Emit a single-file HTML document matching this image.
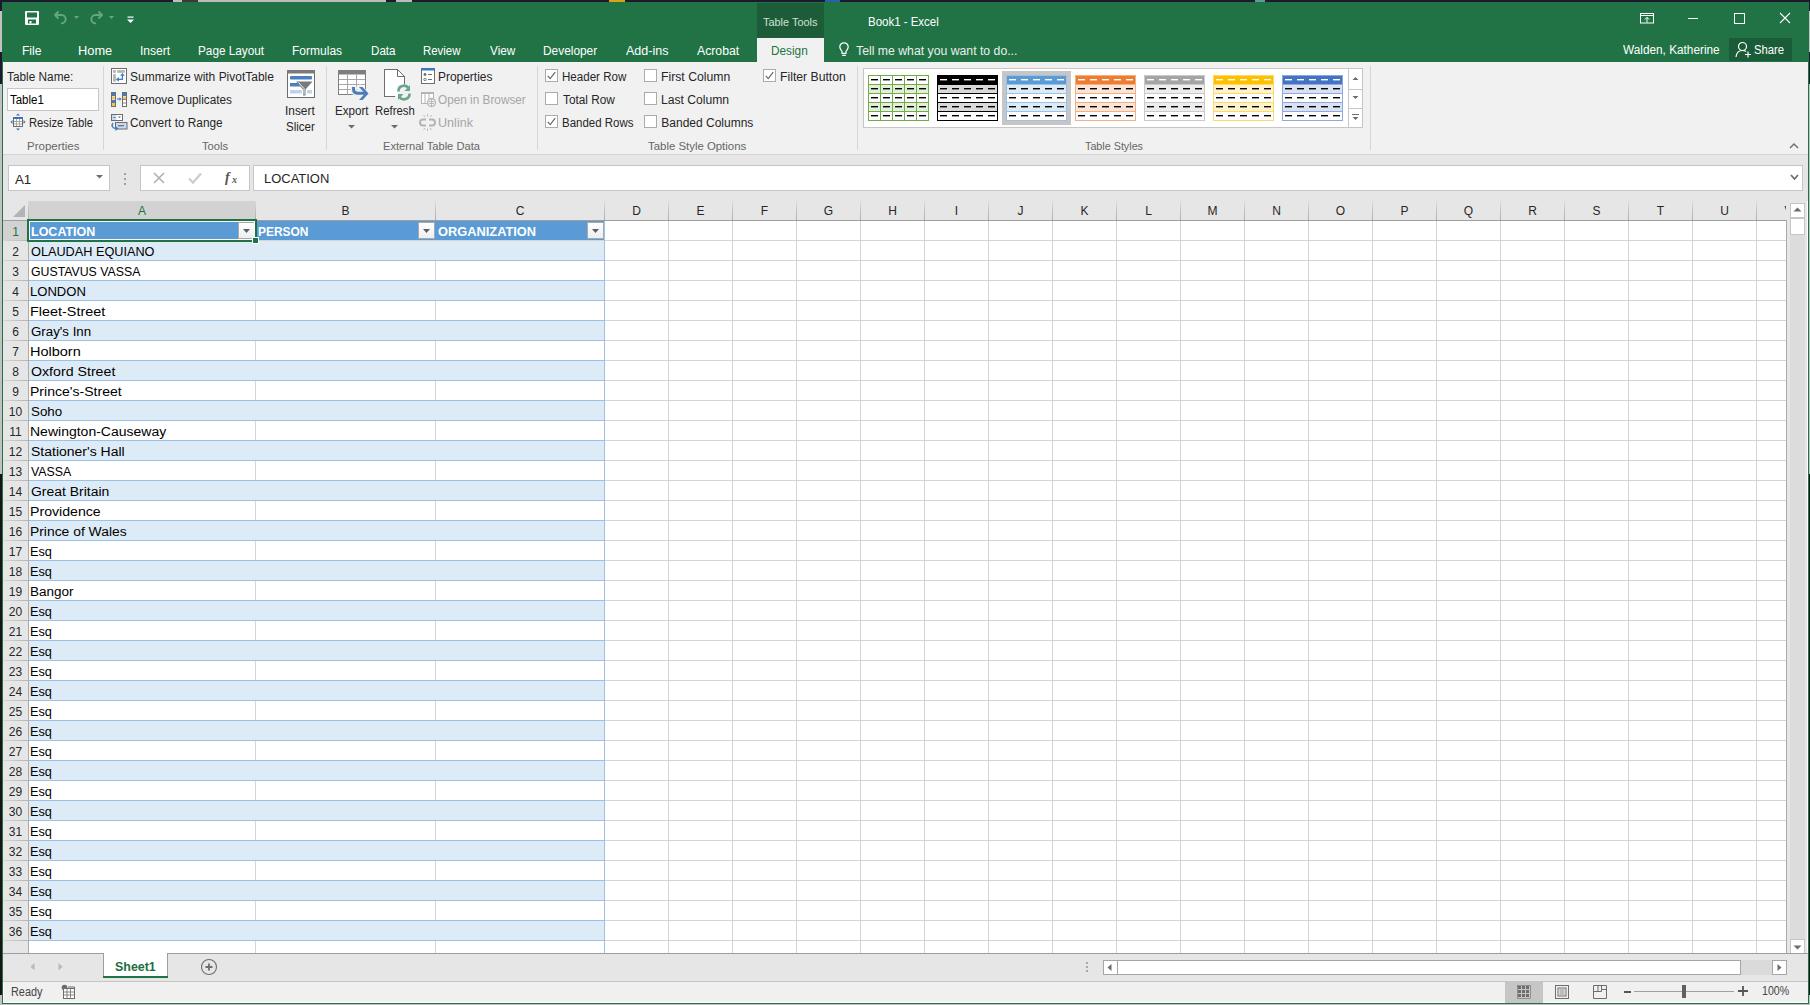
<!DOCTYPE html><html><head><meta charset="utf-8"><style>
html,body{margin:0;padding:0;}
body{width:1810px;height:1005px;position:relative;overflow:hidden;background:#c2c2c2;font-family:'Liberation Sans',sans-serif;}
div,svg{box-sizing:border-box;}
svg{overflow:visible;}
</style></head><body>
<div style="position:absolute;left:0px;top:0px;width:1810px;height:2px;background:#1b1a2e;"></div>
<div style="position:absolute;left:173px;top:0px;width:213px;height:2px;background:#bdbdbd;"></div>
<div style="position:absolute;left:182px;top:0px;width:16px;height:2px;background:#3a3a3a;"></div>
<div style="position:absolute;left:396px;top:0px;width:16px;height:2px;background:#bdbdbd;"></div>
<div style="position:absolute;left:609px;top:0px;width:16px;height:2px;background:#d9a21b;"></div>
<div style="position:absolute;left:825px;top:0px;width:15px;height:2px;background:#2a62a8;"></div>
<div style="position:absolute;left:1255px;top:0px;width:10px;height:2px;background:#5a9aa0;"></div>
<div style="position:absolute;left:0px;top:0px;width:2px;height:11px;background:#1b1a2e;"></div>
<div style="position:absolute;left:0px;top:52px;width:2px;height:32px;background:#1b1a2e;"></div>
<div style="position:absolute;left:0px;top:474px;width:2px;height:521px;background:#151515;"></div>
<div style="position:absolute;left:1809px;top:0px;width:1px;height:11px;background:#1b1a2e;"></div>
<div style="position:absolute;left:1809px;top:52px;width:1px;height:32px;background:#1b1a2e;"></div>
<div style="position:absolute;left:1809px;top:474px;width:1px;height:521px;background:#151515;"></div>
<div style="position:absolute;left:2px;top:2px;width:1807px;height:1002px;background:#217346;"></div>
<div style="position:absolute;left:3px;top:38px;width:1805px;height:964px;background:#ffffff;"></div>
<div style="position:absolute;left:2px;top:2px;width:1807px;height:36px;background:#217346;"></div>
<div style="position:absolute;left:757px;top:3px;width:67px;height:35px;background:#1d5c39;"></div>
<div style="position:absolute;left:763.40px;top:17px;font-family:'Liberation Sans', sans-serif;font-size:11px;line-height:11px;color:#cfe0d5;font-weight:400;white-space:nowrap;transform-origin:0 0;transform:scaleX(0.9926);">Table Tools</div>
<div style="position:absolute;left:868.44px;top:16px;font-family:'Liberation Sans', sans-serif;font-size:12px;line-height:12px;color:#ffffff;font-weight:400;white-space:nowrap;transform-origin:0 0;transform:scaleX(0.9557);">Book1 - Excel</div>
<svg style="position:absolute;left:25px;top:11px;" width="14" height="14" viewBox="0 0 14 14"><rect x="0" y="0" width="14" height="14" rx="1" fill="#fff"/><rect x="2" y="1.5" width="10" height="5" fill="#217346"/><rect x="3" y="8.5" width="8" height="4" fill="#217346"/><rect x="4.5" y="10" width="2" height="2.5" fill="#fff"/></svg>
<svg style="position:absolute;left:53px;top:10px;" width="16" height="16" viewBox="0 0 16 16"><path d="M5.5 1.5 L2 5 L5.5 8.5" fill="none" stroke="#67a582" stroke-width="1.9" stroke-linejoin="round"/><path d="M2.5 5 H8.5 A4.2 4.2 0 0 1 8.5 13.4 H8" fill="none" stroke="#67a582" stroke-width="1.9"/></svg>
<svg style="position:absolute;left:74px;top:16px;" width="6" height="4" viewBox="0 0 6 4"><path d="M0 0 H5 L2.5 3 Z" fill="#67a582"/></svg>
<svg style="position:absolute;left:88px;top:10px;" width="16" height="16" viewBox="0 0 16 16"><path d="M10.5 1.5 L14 5 L10.5 8.5" fill="none" stroke="#67a582" stroke-width="1.9" stroke-linejoin="round"/><path d="M13.5 5 H7.5 A4.2 4.2 0 0 0 7.5 13.4 H8" fill="none" stroke="#67a582" stroke-width="1.9"/></svg>
<svg style="position:absolute;left:109px;top:16px;" width="6" height="4" viewBox="0 0 6 4"><path d="M0 0 H5 L2.5 3 Z" fill="#67a582"/></svg>
<svg style="position:absolute;left:127px;top:16px;" width="7" height="8" viewBox="0 0 7 8"><rect x="0.5" y="0.5" width="6" height="1.2" fill="#fff"/><path d="M0 3.5 H7 L3.5 7 Z" fill="#fff"/></svg>
<svg style="position:absolute;left:1640px;top:13px;" width="14" height="11" viewBox="0 0 14 11"><rect x="0.5" y="0.5" width="13" height="9.5" fill="none" stroke="#fff" stroke-width="1"/><path d="M1 2.5 H13" stroke="#fff" stroke-width="1"/><path d="M7 9.5 V4.5 M4.8 6.5 L7 4.3 L9.2 6.5" fill="none" stroke="#fff" stroke-width="1"/></svg>
<div style="position:absolute;left:1688px;top:18px;width:10px;height:1px;background:#ffffff;"></div>
<svg style="position:absolute;left:1734px;top:13px;" width="11" height="11" viewBox="0 0 11 11"><rect x="0.5" y="0.5" width="10" height="10" fill="none" stroke="#fff" stroke-width="1"/></svg>
<svg style="position:absolute;left:1779px;top:12px;" width="12" height="12" viewBox="0 0 12 12"><path d="M1 1 L11 11 M11 1 L1 11" stroke="#fff" stroke-width="1.1"/></svg>
<div style="position:absolute;left:2px;top:38px;width:1807px;height:24px;background:#217346;"></div>
<div style="position:absolute;left:22.29px;top:45px;font-family:'Liberation Sans', sans-serif;font-size:12px;line-height:12px;color:#ffffff;font-weight:400;white-space:nowrap;transform-origin:0 0;transform:scaleX(1.0056);">File</div>
<div style="position:absolute;left:78.33px;top:45px;font-family:'Liberation Sans', sans-serif;font-size:12px;line-height:12px;color:#ffffff;font-weight:400;white-space:nowrap;transform-origin:0 0;transform:scaleX(1.0689);">Home</div>
<div style="position:absolute;left:139.89px;top:45px;font-family:'Liberation Sans', sans-serif;font-size:12px;line-height:12px;color:#ffffff;font-weight:400;white-space:nowrap;transform-origin:0 0;transform:scaleX(1.0069);">Insert</div>
<div style="position:absolute;left:198.02px;top:45px;font-family:'Liberation Sans', sans-serif;font-size:12px;line-height:12px;color:#ffffff;font-weight:400;white-space:nowrap;transform-origin:0 0;transform:scaleX(0.9804);">Page Layout</div>
<div style="position:absolute;left:292.30px;top:45px;font-family:'Liberation Sans', sans-serif;font-size:12px;line-height:12px;color:#ffffff;font-weight:400;white-space:nowrap;transform-origin:0 0;transform:scaleX(1.0021);">Formulas</div>
<div style="position:absolute;left:370.53px;top:45px;font-family:'Liberation Sans', sans-serif;font-size:12px;line-height:12px;color:#ffffff;font-weight:400;white-space:nowrap;transform-origin:0 0;transform:scaleX(0.9671);">Data</div>
<div style="position:absolute;left:423.35px;top:45px;font-family:'Liberation Sans', sans-serif;font-size:12px;line-height:12px;color:#ffffff;font-weight:400;white-space:nowrap;transform-origin:0 0;transform:scaleX(0.9505);">Review</div>
<div style="position:absolute;left:489.70px;top:45px;font-family:'Liberation Sans', sans-serif;font-size:12px;line-height:12px;color:#ffffff;font-weight:400;white-space:nowrap;transform-origin:0 0;transform:scaleX(0.9805);">View</div>
<div style="position:absolute;left:543.01px;top:45px;font-family:'Liberation Sans', sans-serif;font-size:12px;line-height:12px;color:#ffffff;font-weight:400;white-space:nowrap;transform-origin:0 0;transform:scaleX(0.9907);">Developer</div>
<div style="position:absolute;left:625.90px;top:45px;font-family:'Liberation Sans', sans-serif;font-size:12px;line-height:12px;color:#ffffff;font-weight:400;white-space:nowrap;transform-origin:0 0;transform:scaleX(1.0448);">Add-ins</div>
<div style="position:absolute;left:696.90px;top:45px;font-family:'Liberation Sans', sans-serif;font-size:12px;line-height:12px;color:#ffffff;font-weight:400;white-space:nowrap;transform-origin:0 0;transform:scaleX(1.0194);">Acrobat</div>
<div style="position:absolute;left:757px;top:38px;width:67px;height:24px;background:#f1f1f1;"></div>
<div style="position:absolute;left:771.02px;top:45px;font-family:'Liberation Sans', sans-serif;font-size:12px;line-height:12px;color:#217346;font-weight:400;white-space:nowrap;transform-origin:0 0;transform:scaleX(0.9831);">Design</div>
<svg style="position:absolute;left:839px;top:42px;" width="11" height="15" viewBox="0 0 11 15"><path d="M5 0.8 C2.4 0.8 0.8 2.7 0.8 5 C0.8 6.9 2.2 8 3 9.3 V11.3 H7 V9.3 C7.8 8 9.2 6.9 9.2 5 C9.2 2.7 7.6 0.8 5 0.8 Z M3.2 13.3 H6.8" fill="none" stroke="#fff" stroke-width="1.2"/></svg>
<div style="position:absolute;left:855.69px;top:45px;font-family:'Liberation Sans', sans-serif;font-size:12px;line-height:12px;color:#e9efeb;font-weight:400;white-space:nowrap;transform-origin:0 0;transform:scaleX(1.0211);">Tell me what you want to do...</div>
<div style="position:absolute;left:1622.90px;top:44px;font-family:'Liberation Sans', sans-serif;font-size:12px;line-height:12px;color:#ffffff;font-weight:400;white-space:nowrap;transform-origin:0 0;transform:scaleX(0.9836);">Walden, Katherine</div>
<div style="position:absolute;left:1729px;top:38px;width:63px;height:23px;background:#1b5c38;"></div>
<svg style="position:absolute;left:1735px;top:41px;" width="17" height="17" viewBox="0 0 17 17"><circle cx="7.5" cy="5.5" r="4" fill="none" stroke="#fff" stroke-width="1.2"/><path d="M1 16 C1.5 11.5 4 9.5 7.5 9.5 C9 9.5 10 9.8 11 10.5" fill="none" stroke="#fff" stroke-width="1.2"/><path d="M13 10.5 V16.5 M10 13.5 H16" stroke="#fff" stroke-width="1.2"/></svg>
<div style="position:absolute;left:1754.44px;top:44px;font-family:'Liberation Sans', sans-serif;font-size:12px;line-height:12px;color:#ffffff;font-weight:400;white-space:nowrap;transform-origin:0 0;transform:scaleX(0.9385);">Share</div>
<div style="position:absolute;left:3px;top:62px;width:1805px;height:92px;background:#f1f1f1;"></div>
<div style="position:absolute;left:3px;top:154px;width:1805px;height:1px;background:#d5d5d5;"></div>
<div style="position:absolute;left:103px;top:66px;width:1px;height:84px;background:#d6d6d6;"></div>
<div style="position:absolute;left:326px;top:66px;width:1px;height:84px;background:#d6d6d6;"></div>
<div style="position:absolute;left:537px;top:66px;width:1px;height:84px;background:#d6d6d6;"></div>
<div style="position:absolute;left:857px;top:66px;width:1px;height:84px;background:#d6d6d6;"></div>
<div style="position:absolute;left:1370px;top:66px;width:1px;height:84px;background:#d6d6d6;"></div>
<div style="position:absolute;left:26.56px;top:141px;font-family:'Liberation Sans', sans-serif;font-size:11px;line-height:11px;color:#666666;font-weight:400;white-space:nowrap;transform-origin:0 0;transform:scaleX(1.0451);">Properties</div>
<div style="position:absolute;left:201.80px;top:141px;font-family:'Liberation Sans', sans-serif;font-size:11px;line-height:11px;color:#666666;font-weight:400;white-space:nowrap;transform-origin:0 0;transform:scaleX(1.0159);">Tools</div>
<div style="position:absolute;left:382.59px;top:141px;font-family:'Liberation Sans', sans-serif;font-size:11px;line-height:11px;color:#666666;font-weight:400;white-space:nowrap;transform-origin:0 0;transform:scaleX(1.0116);">External Table Data</div>
<div style="position:absolute;left:647.79px;top:141px;font-family:'Liberation Sans', sans-serif;font-size:11px;line-height:11px;color:#666666;font-weight:400;white-space:nowrap;transform-origin:0 0;transform:scaleX(1.0361);">Table Style Options</div>
<div style="position:absolute;left:1084.80px;top:141px;font-family:'Liberation Sans', sans-serif;font-size:11px;line-height:11px;color:#666666;font-weight:400;white-space:nowrap;transform-origin:0 0;transform:scaleX(0.9779);">Table Styles</div>
<svg style="position:absolute;left:1789px;top:143px;" width="10" height="7" viewBox="0 0 10 7"><path d="M1 5 L5 1 L9 5" fill="none" stroke="#6d6d6d" stroke-width="1.4"/></svg>
<div style="position:absolute;left:7.20px;top:71px;font-family:'Liberation Sans', sans-serif;font-size:12px;line-height:12px;color:#262626;font-weight:400;white-space:nowrap;transform-origin:0 0;transform:scaleX(0.9848);">Table Name:</div>
<div style="position:absolute;left:7px;top:88px;width:92px;height:23px;background:#ffffff;border:1px solid #c6c6c6;"></div>
<div style="position:absolute;left:10.21px;top:94px;font-family:'Liberation Sans', sans-serif;font-size:12px;line-height:12px;color:#000000;font-weight:400;white-space:nowrap;transform-origin:0 0;transform:scaleX(0.9565);">Table1</div>
<svg style="position:absolute;left:10px;top:113px;" width="17" height="18" viewBox="0 0 17 18"><rect x="3.5" y="4.5" width="9" height="9" fill="#fff" stroke="#6d6d6d" stroke-width="1"/><path d="M6.5 6 V13 M9.5 6 V13 M4 8.5 H12 M4 11 H12" stroke="#a8a8a8" stroke-width="1"/><rect x="3" y="4" width="10" height="2" fill="#3b74b4"/><path d="M8 0.5 L6 2.5 H10 Z M8 17.5 L6 15.5 H10 Z M0.5 9 L2.5 7 V11 Z M15.5 9 L13.5 7 V11 Z" fill="#3b74b4"/></svg>
<div style="position:absolute;left:28.57px;top:117px;font-family:'Liberation Sans', sans-serif;font-size:12px;line-height:12px;color:#262626;font-weight:400;white-space:nowrap;transform-origin:0 0;transform:scaleX(0.9342);">Resize Table</div>
<svg style="position:absolute;left:111px;top:68px;" width="16" height="16" viewBox="0 0 16 16"><rect x="0.5" y="0.5" width="15" height="15" fill="#fff" stroke="#6d6d6d" stroke-width="1"/><rect x="2.1" y="2.1" width="2.8" height="2.7" fill="#b4b4b4"/><rect x="6.2" y="2.1" width="7.6" height="2.7" fill="#b4b4b4"/><rect x="2.1" y="6.2" width="2.8" height="7.5" fill="#b4b4b4"/><path d="M6.5 11.4 H11.4 V7" fill="none" stroke="#3f7ec2" stroke-width="1.3"/><path d="M4.9 11.4 L7.9 9.1 V13.7 Z M11.4 5.1 L9.1 7.7 H13.8 Z" fill="#3f7ec2"/></svg>
<div style="position:absolute;left:129.60px;top:71px;font-family:'Liberation Sans', sans-serif;font-size:12px;line-height:12px;color:#262626;font-weight:400;white-space:nowrap;transform-origin:0 0;transform:scaleX(0.9993);">Summarize with PivotTable</div>
<svg style="position:absolute;left:111px;top:92px;" width="16" height="15" viewBox="0 0 16 15"><rect x="0.5" y="0.5" width="4" height="14" fill="#fff" stroke="#6d6d6d"/><rect x="1" y="1" width="3" height="3" fill="#3f7ec2"/><rect x="1" y="4.5" width="3" height="3" fill="#f2c25c"/><rect x="1" y="8" width="3" height="3" fill="#3f7ec2"/><rect x="1" y="11" width="3" height="3" fill="#f2c25c"/><rect x="11.5" y="0.5" width="4" height="14" fill="#fff" stroke="#6d6d6d"/><rect x="12" y="1" width="3" height="3" fill="#3f7ec2"/><rect x="12" y="4.5" width="3" height="3" fill="#f2c25c"/><path d="M12 7.5 H15 M12 11 H15" stroke="#6d6d6d" stroke-width="0.8"/><path d="M6 7 H9.5" stroke="#3f7ec2" stroke-width="1.2"/><path d="M8.5 5.3 L10.5 7 L8.5 8.7 Z" fill="#3f7ec2"/></svg>
<div style="position:absolute;left:129.52px;top:94px;font-family:'Liberation Sans', sans-serif;font-size:12px;line-height:12px;color:#262626;font-weight:400;white-space:nowrap;transform-origin:0 0;transform:scaleX(0.9795);">Remove Duplicates</div>
<svg style="position:absolute;left:111px;top:114px;" width="17" height="17" viewBox="0 0 17 17"><rect x="0.5" y="0.5" width="11" height="6" fill="#fff" stroke="#6d6d6d"/><rect x="1" y="1" width="4.5" height="5" fill="#c5dcf1"/><path d="M2.3 3.5 H4.2" stroke="#6d6d6d"/><path d="M7 2.5 H10 L8.5 4.3 Z" fill="#6d6d6d"/><rect x="4.5" y="8.5" width="11.5" height="6.5" fill="#c5dcf1" stroke="#6d6d6d"/><path d="M7 11.7 H13" stroke="#6d6d6d" stroke-width="1.2"/><path d="M2.2 9 C0.2 11 1 14.5 5 14.5" fill="none" stroke="#3f7ec2" stroke-width="1.4"/><path d="M4.5 12 L7.5 14.5 L4.5 17 Z" fill="#3f7ec2"/></svg>
<div style="position:absolute;left:129.91px;top:117px;font-family:'Liberation Sans', sans-serif;font-size:12px;line-height:12px;color:#262626;font-weight:400;white-space:nowrap;transform-origin:0 0;transform:scaleX(0.9849);">Convert to Range</div>
<svg style="position:absolute;left:287px;top:70px;" width="28" height="28" viewBox="0 0 28 28"><rect x="0.5" y="0.5" width="27" height="27" fill="#fff" stroke="#6d6d6d" stroke-width="1"/><rect x="0" y="0" width="28" height="3.5" fill="#7a7a7a"/><rect x="3" y="6" width="22" height="3.5" rx="1" fill="#4a80bf"/><path d="M3 13 H11 L13.5 16.5 H3 Z" fill="#4a80bf"/><rect x="3" y="20" width="12" height="3.5" rx="0.5" fill="#bdd3ea"/><rect x="20" y="20" width="5" height="3.5" rx="0.5" fill="#bdd3ea"/><path d="M9 11.5 H25.5 L18.5 19.5 V25.5 H16 V19.5 Z" fill="#7a7a7a"/><path d="M11.5 12.5 L17 18.5 V24.5" fill="none" stroke="#fff" stroke-width="0.9"/></svg>
<div style="position:absolute;left:285.41px;top:105px;font-family:'Liberation Sans', sans-serif;font-size:12px;line-height:12px;color:#262626;font-weight:400;white-space:nowrap;transform-origin:0 0;transform:scaleX(0.9896);">Insert</div>
<div style="position:absolute;left:286.42px;top:121px;font-family:'Liberation Sans', sans-serif;font-size:12px;line-height:12px;color:#262626;font-weight:400;white-space:nowrap;transform-origin:0 0;transform:scaleX(0.9589);">Slicer</div>
<svg style="position:absolute;left:338px;top:70px;" width="32" height="32" viewBox="0 0 32 32"><rect x="0.5" y="0.5" width="27" height="24" fill="#fff" stroke="#7f7f7f" stroke-width="1"/><rect x="0" y="0" width="28" height="4.5" fill="#7f7f7f"/><path d="M9.5 4.5 V24.5 M18.5 4.5 V24.5 M1 9.5 H27 M1 14.5 H27 M1 19.5 H27" stroke="#a6a6a6" stroke-width="1"/><path d="M15.5 16 V19 C15.5 22 17 23.3 20 23.3 H27 M20 16 L27.5 23.5 L20 31" fill="none" stroke="#f1f1f1" stroke-width="6"/><path d="M15.5 17 V19 C15.5 22 17 23.3 20 23.3 H27" fill="none" stroke="#4a7ebb" stroke-width="3"/><path d="M21 17 H24.5 L30.5 23.5 L24.5 30 H21 L27 23.5 Z" fill="#4a7ebb"/></svg>
<div style="position:absolute;left:334.53px;top:105px;font-family:'Liberation Sans', sans-serif;font-size:12px;line-height:12px;color:#262626;font-weight:400;white-space:nowrap;transform-origin:0 0;transform:scaleX(0.9673);">Export</div>
<svg style="position:absolute;left:348px;top:125px;" width="7" height="4" viewBox="0 0 7 4"><path d="M0 0 H7 L3.5 3.5 Z" fill="#6d6d6d"/></svg>
<svg style="position:absolute;left:384px;top:69px;" width="30" height="33" viewBox="0 0 30 33"><path d="M0.5 0.5 H13.5 L20.5 7.5 V15" fill="none" stroke="#6d6d6d" stroke-width="1"/><path d="M0.5 0.5 V27.5 H11" fill="none" stroke="#6d6d6d" stroke-width="1"/><rect x="1" y="1" width="12.5" height="26" fill="#fff"/><path d="M13.5 1 V7.5 H20" fill="#fff" stroke="#6d6d6d" stroke-width="1"/><path d="M1 1 H13 L20 8 V16 H13 V27 H1 Z" fill="#fff"/><path d="M0.5 0.5 H13.5 L20.5 7.5 V15 M0.5 0.5 V27.5 H11 M13.5 0.5 V7.5 H20.5" fill="none" stroke="#6d6d6d" stroke-width="1"/><path d="M14.5 22.5 A5.5 5.5 0 0 1 24.5 19" fill="none" stroke="#6aa68e" stroke-width="2.6"/><path d="M26 16 V22 H20.5 Z" fill="#6aa68e"/><path d="M25.5 24.5 A5.5 5.5 0 0 1 15.5 28" fill="none" stroke="#6aa68e" stroke-width="2.6"/><path d="M14 31 V25 H19.5 Z" fill="#6aa68e"/></svg>
<div style="position:absolute;left:374.55px;top:105px;font-family:'Liberation Sans', sans-serif;font-size:12px;line-height:12px;color:#262626;font-weight:400;white-space:nowrap;transform-origin:0 0;transform:scaleX(0.9453);">Refresh</div>
<svg style="position:absolute;left:391px;top:125px;" width="7" height="4" viewBox="0 0 7 4"><path d="M0 0 H7 L3.5 3.5 Z" fill="#6d6d6d"/></svg>
<svg style="position:absolute;left:421px;top:68px;" width="14" height="16" viewBox="0 0 14 16"><rect x="0.5" y="0.5" width="13" height="15" fill="#fff" stroke="#6d6d6d" stroke-width="1"/><rect x="0" y="0" width="14" height="2.5" fill="#3c78b9"/><circle cx="4" cy="6.5" r="1.4" fill="#6d6d6d"/><circle cx="4" cy="11.5" r="1.2" fill="none" stroke="#6d6d6d" stroke-width="0.9"/><path d="M7 6.5 H11 M7 11.5 H11" stroke="#6d6d6d" stroke-width="1"/></svg>
<div style="position:absolute;left:438.01px;top:71px;font-family:'Liberation Sans', sans-serif;font-size:12px;line-height:12px;color:#262626;font-weight:400;white-space:nowrap;transform-origin:0 0;transform:scaleX(0.9944);">Properties</div>
<svg style="position:absolute;left:421px;top:92px;" width="16" height="15" viewBox="0 0 16 15"><rect x="0.5" y="0.5" width="12" height="11" fill="#fff" stroke="#b4b4b4"/><rect x="0" y="0" width="13" height="2" fill="#b4b4b4"/><path d="M4 2 V11.5 M8 2 V8" stroke="#b4b4b4"/><circle cx="10.5" cy="10.5" r="4" fill="#f1f1f1" stroke="#b4b4b4" stroke-width="1.3"/><path d="M8 9.5 H13 M8 11.5 H13 M10.5 7 V14" stroke="#b4b4b4" stroke-width="0.9"/></svg>
<div style="position:absolute;left:438.41px;top:94px;font-family:'Liberation Sans', sans-serif;font-size:12px;line-height:12px;color:#a6a6a6;font-weight:400;white-space:nowrap;transform-origin:0 0;transform:scaleX(0.9819);">Open in Browser</div>
<svg style="position:absolute;left:419px;top:114px;" width="17" height="17" viewBox="0 0 17 17"><path d="M7 5.5 H4 A3 3 0 0 0 4 11.5 H7 M10 5.5 H13 A3 3 0 0 1 13 11.5 H10" fill="none" stroke="#b4b4b4" stroke-width="2"/><path d="M8.5 0 V2.5 M4.5 1 L6 3 M12.5 1 L11 3 M8.5 14.5 V17 M4.5 16 L6 14 M12.5 16 L11 14" stroke="#b4b4b4" stroke-width="0.9"/></svg>
<div style="position:absolute;left:438.06px;top:117px;font-family:'Liberation Sans', sans-serif;font-size:12px;line-height:12px;color:#a6a6a6;font-weight:400;white-space:nowrap;transform-origin:0 0;transform:scaleX(1.0494);">Unlink</div>
<div style="position:absolute;left:562.34px;top:71px;font-family:'Liberation Sans', sans-serif;font-size:12px;line-height:12px;color:#262626;font-weight:400;white-space:nowrap;transform-origin:0 0;transform:scaleX(0.9650);">Header Row</div>
<div style="position:absolute;left:563.00px;top:94px;font-family:'Liberation Sans', sans-serif;font-size:12px;line-height:12px;color:#262626;font-weight:400;white-space:nowrap;transform-origin:0 0;transform:scaleX(0.9847);">Total Row</div>
<div style="position:absolute;left:562.34px;top:117px;font-family:'Liberation Sans', sans-serif;font-size:12px;line-height:12px;color:#262626;font-weight:400;white-space:nowrap;transform-origin:0 0;transform:scaleX(0.9563);">Banded Rows</div>
<div style="position:absolute;left:661.28px;top:71px;font-family:'Liberation Sans', sans-serif;font-size:12px;line-height:12px;color:#262626;font-weight:400;white-space:nowrap;transform-origin:0 0;transform:scaleX(1.0181);">First Column</div>
<div style="position:absolute;left:661.29px;top:94px;font-family:'Liberation Sans', sans-serif;font-size:12px;line-height:12px;color:#262626;font-weight:400;white-space:nowrap;transform-origin:0 0;transform:scaleX(1.0107);">Last Column</div>
<div style="position:absolute;left:661.30px;top:117px;font-family:'Liberation Sans', sans-serif;font-size:12px;line-height:12px;color:#262626;font-weight:400;white-space:nowrap;transform-origin:0 0;transform:scaleX(1.0000);">Banded Columns</div>
<div style="position:absolute;left:780.48px;top:71px;font-family:'Liberation Sans', sans-serif;font-size:12px;line-height:12px;color:#262626;font-weight:400;white-space:nowrap;transform-origin:0 0;transform:scaleX(1.0175);">Filter Button</div>
<div style="position:absolute;left:545px;top:69px;width:13px;height:13px;background:#ffffff;border:1px solid #ababab;"></div>
<svg style="position:absolute;left:545px;top:69px;" width="13" height="13" viewBox="0 0 13 13"><path d="M2.8 6.8 L5.2 9.6 L10.2 3.2" fill="none" stroke="#666" stroke-width="1.2"/></svg>
<div style="position:absolute;left:545px;top:92px;width:13px;height:13px;background:#ffffff;border:1px solid #ababab;"></div>
<div style="position:absolute;left:545px;top:115px;width:13px;height:13px;background:#ffffff;border:1px solid #ababab;"></div>
<svg style="position:absolute;left:545px;top:115px;" width="13" height="13" viewBox="0 0 13 13"><path d="M2.8 6.8 L5.2 9.6 L10.2 3.2" fill="none" stroke="#666" stroke-width="1.2"/></svg>
<div style="position:absolute;left:644px;top:69px;width:13px;height:13px;background:#ffffff;border:1px solid #ababab;"></div>
<div style="position:absolute;left:644px;top:92px;width:13px;height:13px;background:#ffffff;border:1px solid #ababab;"></div>
<div style="position:absolute;left:644px;top:115px;width:13px;height:13px;background:#ffffff;border:1px solid #ababab;"></div>
<div style="position:absolute;left:763px;top:69px;width:13px;height:13px;background:#ffffff;border:1px solid #ababab;"></div>
<svg style="position:absolute;left:763px;top:69px;" width="13" height="13" viewBox="0 0 13 13"><path d="M2.8 6.8 L5.2 9.6 L10.2 3.2" fill="none" stroke="#666" stroke-width="1.2"/></svg>
<div style="position:absolute;left:863px;top:68px;width:486px;height:60px;background:#ffffff;border:1px solid #c6c6c6;"></div>
<div style="position:absolute;left:1348px;top:68px;width:15px;height:60px;background:#ffffff;border:1px solid #c6c6c6;"></div>
<div style="position:absolute;left:1349px;top:89px;width:13px;height:1px;background:#c6c6c6;"></div>
<div style="position:absolute;left:1349px;top:108px;width:13px;height:1px;background:#c6c6c6;"></div>
<svg style="position:absolute;left:1352px;top:77px;" width="7" height="4" viewBox="0 0 7 4"><path d="M0.5 3 L3.5 0 L6.5 3 Z" fill="#6d6d6d"/></svg>
<svg style="position:absolute;left:1352px;top:96px;" width="7" height="4" viewBox="0 0 7 4"><path d="M0.5 0 L3.5 3 L6.5 0 Z" fill="#6d6d6d"/></svg>
<svg style="position:absolute;left:1352px;top:114px;" width="7" height="7" viewBox="0 0 7 7"><path d="M0 0.5 H7" stroke="#6d6d6d"/><path d="M0.5 3 L3.5 6 L6.5 3 Z" fill="#6d6d6d"/></svg>
<div style="position:absolute;left:1002px;top:71px;width:69px;height:54px;background:#c6c6c6;"></div>
<svg style="position:absolute;left:868px;top:75px;" width="61" height="46" viewBox="0 0 61 46"><rect x="0" y="0" width="61" height="46" fill="#fff"/><rect x="0" y="0" width="61" height="10" fill="#ffffff"/><rect x="0" y="9" width="61" height="10" fill="#e2efda"/><rect x="0" y="18" width="61" height="10" fill="#ffffff"/><rect x="0" y="27" width="61" height="10" fill="#e2efda"/><rect x="0" y="36" width="61" height="10" fill="#ffffff"/><rect x="0" y="9" width="61" height="1" fill="#70ad47"/><rect x="0" y="18" width="61" height="1" fill="#70ad47"/><rect x="0" y="27" width="61" height="1" fill="#70ad47"/><rect x="0" y="36" width="61" height="1" fill="#70ad47"/><rect x="12" y="0" width="1" height="46" fill="#70ad47"/><rect x="24" y="0" width="1" height="46" fill="#70ad47"/><rect x="36" y="0" width="1" height="46" fill="#70ad47"/><rect x="48" y="0" width="1" height="46" fill="#70ad47"/><rect x="0.5" y="0.5" width="60" height="45" fill="none" stroke="#70ad47" stroke-width="1"/><rect x="3" y="4" width="7" height="1.4" fill="#000000"/><rect x="15" y="4" width="7" height="1.4" fill="#000000"/><rect x="27" y="4" width="7" height="1.4" fill="#000000"/><rect x="39" y="4" width="7" height="1.4" fill="#000000"/><rect x="51" y="4" width="7" height="1.4" fill="#000000"/><rect x="3" y="13" width="7" height="1.4" fill="#000000"/><rect x="15" y="13" width="7" height="1.4" fill="#000000"/><rect x="27" y="13" width="7" height="1.4" fill="#000000"/><rect x="39" y="13" width="7" height="1.4" fill="#000000"/><rect x="51" y="13" width="7" height="1.4" fill="#000000"/><rect x="3" y="22" width="7" height="1.4" fill="#000000"/><rect x="15" y="22" width="7" height="1.4" fill="#000000"/><rect x="27" y="22" width="7" height="1.4" fill="#000000"/><rect x="39" y="22" width="7" height="1.4" fill="#000000"/><rect x="51" y="22" width="7" height="1.4" fill="#000000"/><rect x="3" y="31" width="7" height="1.4" fill="#000000"/><rect x="15" y="31" width="7" height="1.4" fill="#000000"/><rect x="27" y="31" width="7" height="1.4" fill="#000000"/><rect x="39" y="31" width="7" height="1.4" fill="#000000"/><rect x="51" y="31" width="7" height="1.4" fill="#000000"/><rect x="3" y="40" width="7" height="1.4" fill="#000000"/><rect x="15" y="40" width="7" height="1.4" fill="#000000"/><rect x="27" y="40" width="7" height="1.4" fill="#000000"/><rect x="39" y="40" width="7" height="1.4" fill="#000000"/><rect x="51" y="40" width="7" height="1.4" fill="#000000"/></svg>
<svg style="position:absolute;left:937px;top:75px;" width="61" height="46" viewBox="0 0 61 46"><rect x="0" y="0" width="61" height="46" fill="#fff"/><rect x="0" y="0" width="61" height="10" fill="#000000"/><rect x="0" y="9" width="61" height="10" fill="#d9d9d9"/><rect x="0" y="18" width="61" height="10" fill="#ffffff"/><rect x="0" y="27" width="61" height="10" fill="#d9d9d9"/><rect x="0" y="36" width="61" height="10" fill="#ffffff"/><rect x="0" y="9" width="61" height="1" fill="#000000"/><rect x="0" y="18" width="61" height="1" fill="#000000"/><rect x="0" y="27" width="61" height="1" fill="#000000"/><rect x="0" y="36" width="61" height="1" fill="#000000"/><rect x="0.5" y="0.5" width="60" height="45" fill="none" stroke="#000000" stroke-width="1"/><rect x="3" y="4" width="7" height="1.4" fill="#ffffff"/><rect x="15" y="4" width="7" height="1.4" fill="#ffffff"/><rect x="27" y="4" width="7" height="1.4" fill="#ffffff"/><rect x="39" y="4" width="7" height="1.4" fill="#ffffff"/><rect x="51" y="4" width="7" height="1.4" fill="#ffffff"/><rect x="3" y="13" width="7" height="1.4" fill="#000000"/><rect x="15" y="13" width="7" height="1.4" fill="#000000"/><rect x="27" y="13" width="7" height="1.4" fill="#000000"/><rect x="39" y="13" width="7" height="1.4" fill="#000000"/><rect x="51" y="13" width="7" height="1.4" fill="#000000"/><rect x="3" y="22" width="7" height="1.4" fill="#000000"/><rect x="15" y="22" width="7" height="1.4" fill="#000000"/><rect x="27" y="22" width="7" height="1.4" fill="#000000"/><rect x="39" y="22" width="7" height="1.4" fill="#000000"/><rect x="51" y="22" width="7" height="1.4" fill="#000000"/><rect x="3" y="31" width="7" height="1.4" fill="#000000"/><rect x="15" y="31" width="7" height="1.4" fill="#000000"/><rect x="27" y="31" width="7" height="1.4" fill="#000000"/><rect x="39" y="31" width="7" height="1.4" fill="#000000"/><rect x="51" y="31" width="7" height="1.4" fill="#000000"/><rect x="3" y="40" width="7" height="1.4" fill="#000000"/><rect x="15" y="40" width="7" height="1.4" fill="#000000"/><rect x="27" y="40" width="7" height="1.4" fill="#000000"/><rect x="39" y="40" width="7" height="1.4" fill="#000000"/><rect x="51" y="40" width="7" height="1.4" fill="#000000"/></svg>
<svg style="position:absolute;left:1006px;top:75px;" width="61" height="46" viewBox="0 0 61 46"><rect x="0" y="0" width="61" height="46" fill="#fff"/><rect x="0" y="0" width="61" height="10" fill="#5b9bd5"/><rect x="0" y="9" width="61" height="10" fill="#ddebf7"/><rect x="0" y="18" width="61" height="10" fill="#ffffff"/><rect x="0" y="27" width="61" height="10" fill="#ddebf7"/><rect x="0" y="36" width="61" height="10" fill="#ffffff"/><rect x="0" y="9" width="61" height="1" fill="#9bc2e6"/><rect x="0" y="18" width="61" height="1" fill="#9bc2e6"/><rect x="0" y="27" width="61" height="1" fill="#9bc2e6"/><rect x="0" y="36" width="61" height="1" fill="#9bc2e6"/><rect x="0.5" y="0.5" width="60" height="45" fill="none" stroke="#9bc2e6" stroke-width="1"/><rect x="3" y="4" width="7" height="1.4" fill="#ffffff"/><rect x="15" y="4" width="7" height="1.4" fill="#ffffff"/><rect x="27" y="4" width="7" height="1.4" fill="#ffffff"/><rect x="39" y="4" width="7" height="1.4" fill="#ffffff"/><rect x="51" y="4" width="7" height="1.4" fill="#ffffff"/><rect x="3" y="13" width="7" height="1.4" fill="#000000"/><rect x="15" y="13" width="7" height="1.4" fill="#000000"/><rect x="27" y="13" width="7" height="1.4" fill="#000000"/><rect x="39" y="13" width="7" height="1.4" fill="#000000"/><rect x="51" y="13" width="7" height="1.4" fill="#000000"/><rect x="3" y="22" width="7" height="1.4" fill="#000000"/><rect x="15" y="22" width="7" height="1.4" fill="#000000"/><rect x="27" y="22" width="7" height="1.4" fill="#000000"/><rect x="39" y="22" width="7" height="1.4" fill="#000000"/><rect x="51" y="22" width="7" height="1.4" fill="#000000"/><rect x="3" y="31" width="7" height="1.4" fill="#000000"/><rect x="15" y="31" width="7" height="1.4" fill="#000000"/><rect x="27" y="31" width="7" height="1.4" fill="#000000"/><rect x="39" y="31" width="7" height="1.4" fill="#000000"/><rect x="51" y="31" width="7" height="1.4" fill="#000000"/><rect x="3" y="40" width="7" height="1.4" fill="#000000"/><rect x="15" y="40" width="7" height="1.4" fill="#000000"/><rect x="27" y="40" width="7" height="1.4" fill="#000000"/><rect x="39" y="40" width="7" height="1.4" fill="#000000"/><rect x="51" y="40" width="7" height="1.4" fill="#000000"/></svg>
<svg style="position:absolute;left:1075px;top:75px;" width="61" height="46" viewBox="0 0 61 46"><rect x="0" y="0" width="61" height="46" fill="#fff"/><rect x="0" y="0" width="61" height="10" fill="#ed7d31"/><rect x="0" y="9" width="61" height="10" fill="#fce4d6"/><rect x="0" y="18" width="61" height="10" fill="#ffffff"/><rect x="0" y="27" width="61" height="10" fill="#fce4d6"/><rect x="0" y="36" width="61" height="10" fill="#ffffff"/><rect x="0" y="9" width="61" height="1" fill="#f4b084"/><rect x="0" y="18" width="61" height="1" fill="#f4b084"/><rect x="0" y="27" width="61" height="1" fill="#f4b084"/><rect x="0" y="36" width="61" height="1" fill="#f4b084"/><rect x="0.5" y="0.5" width="60" height="45" fill="none" stroke="#f4b084" stroke-width="1"/><rect x="3" y="4" width="7" height="1.4" fill="#ffffff"/><rect x="15" y="4" width="7" height="1.4" fill="#ffffff"/><rect x="27" y="4" width="7" height="1.4" fill="#ffffff"/><rect x="39" y="4" width="7" height="1.4" fill="#ffffff"/><rect x="51" y="4" width="7" height="1.4" fill="#ffffff"/><rect x="3" y="13" width="7" height="1.4" fill="#000000"/><rect x="15" y="13" width="7" height="1.4" fill="#000000"/><rect x="27" y="13" width="7" height="1.4" fill="#000000"/><rect x="39" y="13" width="7" height="1.4" fill="#000000"/><rect x="51" y="13" width="7" height="1.4" fill="#000000"/><rect x="3" y="22" width="7" height="1.4" fill="#000000"/><rect x="15" y="22" width="7" height="1.4" fill="#000000"/><rect x="27" y="22" width="7" height="1.4" fill="#000000"/><rect x="39" y="22" width="7" height="1.4" fill="#000000"/><rect x="51" y="22" width="7" height="1.4" fill="#000000"/><rect x="3" y="31" width="7" height="1.4" fill="#000000"/><rect x="15" y="31" width="7" height="1.4" fill="#000000"/><rect x="27" y="31" width="7" height="1.4" fill="#000000"/><rect x="39" y="31" width="7" height="1.4" fill="#000000"/><rect x="51" y="31" width="7" height="1.4" fill="#000000"/><rect x="3" y="40" width="7" height="1.4" fill="#000000"/><rect x="15" y="40" width="7" height="1.4" fill="#000000"/><rect x="27" y="40" width="7" height="1.4" fill="#000000"/><rect x="39" y="40" width="7" height="1.4" fill="#000000"/><rect x="51" y="40" width="7" height="1.4" fill="#000000"/></svg>
<svg style="position:absolute;left:1144px;top:75px;" width="61" height="46" viewBox="0 0 61 46"><rect x="0" y="0" width="61" height="46" fill="#fff"/><rect x="0" y="0" width="61" height="10" fill="#a5a5a5"/><rect x="0" y="9" width="61" height="10" fill="#ededed"/><rect x="0" y="18" width="61" height="10" fill="#ffffff"/><rect x="0" y="27" width="61" height="10" fill="#ededed"/><rect x="0" y="36" width="61" height="10" fill="#ffffff"/><rect x="0" y="9" width="61" height="1" fill="#c9c9c9"/><rect x="0" y="18" width="61" height="1" fill="#c9c9c9"/><rect x="0" y="27" width="61" height="1" fill="#c9c9c9"/><rect x="0" y="36" width="61" height="1" fill="#c9c9c9"/><rect x="0.5" y="0.5" width="60" height="45" fill="none" stroke="#c9c9c9" stroke-width="1"/><rect x="3" y="4" width="7" height="1.4" fill="#ffffff"/><rect x="15" y="4" width="7" height="1.4" fill="#ffffff"/><rect x="27" y="4" width="7" height="1.4" fill="#ffffff"/><rect x="39" y="4" width="7" height="1.4" fill="#ffffff"/><rect x="51" y="4" width="7" height="1.4" fill="#ffffff"/><rect x="3" y="13" width="7" height="1.4" fill="#000000"/><rect x="15" y="13" width="7" height="1.4" fill="#000000"/><rect x="27" y="13" width="7" height="1.4" fill="#000000"/><rect x="39" y="13" width="7" height="1.4" fill="#000000"/><rect x="51" y="13" width="7" height="1.4" fill="#000000"/><rect x="3" y="22" width="7" height="1.4" fill="#000000"/><rect x="15" y="22" width="7" height="1.4" fill="#000000"/><rect x="27" y="22" width="7" height="1.4" fill="#000000"/><rect x="39" y="22" width="7" height="1.4" fill="#000000"/><rect x="51" y="22" width="7" height="1.4" fill="#000000"/><rect x="3" y="31" width="7" height="1.4" fill="#000000"/><rect x="15" y="31" width="7" height="1.4" fill="#000000"/><rect x="27" y="31" width="7" height="1.4" fill="#000000"/><rect x="39" y="31" width="7" height="1.4" fill="#000000"/><rect x="51" y="31" width="7" height="1.4" fill="#000000"/><rect x="3" y="40" width="7" height="1.4" fill="#000000"/><rect x="15" y="40" width="7" height="1.4" fill="#000000"/><rect x="27" y="40" width="7" height="1.4" fill="#000000"/><rect x="39" y="40" width="7" height="1.4" fill="#000000"/><rect x="51" y="40" width="7" height="1.4" fill="#000000"/></svg>
<svg style="position:absolute;left:1213px;top:75px;" width="61" height="46" viewBox="0 0 61 46"><rect x="0" y="0" width="61" height="46" fill="#fff"/><rect x="0" y="0" width="61" height="10" fill="#ffc000"/><rect x="0" y="9" width="61" height="10" fill="#fff2cc"/><rect x="0" y="18" width="61" height="10" fill="#ffffff"/><rect x="0" y="27" width="61" height="10" fill="#fff2cc"/><rect x="0" y="36" width="61" height="10" fill="#ffffff"/><rect x="0" y="9" width="61" height="1" fill="#ffd966"/><rect x="0" y="18" width="61" height="1" fill="#ffd966"/><rect x="0" y="27" width="61" height="1" fill="#ffd966"/><rect x="0" y="36" width="61" height="1" fill="#ffd966"/><rect x="0.5" y="0.5" width="60" height="45" fill="none" stroke="#ffd966" stroke-width="1"/><rect x="3" y="4" width="7" height="1.4" fill="#ffffff"/><rect x="15" y="4" width="7" height="1.4" fill="#ffffff"/><rect x="27" y="4" width="7" height="1.4" fill="#ffffff"/><rect x="39" y="4" width="7" height="1.4" fill="#ffffff"/><rect x="51" y="4" width="7" height="1.4" fill="#ffffff"/><rect x="3" y="13" width="7" height="1.4" fill="#000000"/><rect x="15" y="13" width="7" height="1.4" fill="#000000"/><rect x="27" y="13" width="7" height="1.4" fill="#000000"/><rect x="39" y="13" width="7" height="1.4" fill="#000000"/><rect x="51" y="13" width="7" height="1.4" fill="#000000"/><rect x="3" y="22" width="7" height="1.4" fill="#000000"/><rect x="15" y="22" width="7" height="1.4" fill="#000000"/><rect x="27" y="22" width="7" height="1.4" fill="#000000"/><rect x="39" y="22" width="7" height="1.4" fill="#000000"/><rect x="51" y="22" width="7" height="1.4" fill="#000000"/><rect x="3" y="31" width="7" height="1.4" fill="#000000"/><rect x="15" y="31" width="7" height="1.4" fill="#000000"/><rect x="27" y="31" width="7" height="1.4" fill="#000000"/><rect x="39" y="31" width="7" height="1.4" fill="#000000"/><rect x="51" y="31" width="7" height="1.4" fill="#000000"/><rect x="3" y="40" width="7" height="1.4" fill="#000000"/><rect x="15" y="40" width="7" height="1.4" fill="#000000"/><rect x="27" y="40" width="7" height="1.4" fill="#000000"/><rect x="39" y="40" width="7" height="1.4" fill="#000000"/><rect x="51" y="40" width="7" height="1.4" fill="#000000"/></svg>
<svg style="position:absolute;left:1282px;top:75px;" width="61" height="46" viewBox="0 0 61 46"><rect x="0" y="0" width="61" height="46" fill="#fff"/><rect x="0" y="0" width="61" height="10" fill="#4472c4"/><rect x="0" y="9" width="61" height="10" fill="#d9e1f2"/><rect x="0" y="18" width="61" height="10" fill="#ffffff"/><rect x="0" y="27" width="61" height="10" fill="#d9e1f2"/><rect x="0" y="36" width="61" height="10" fill="#ffffff"/><rect x="0" y="9" width="61" height="1" fill="#8ea9db"/><rect x="0" y="18" width="61" height="1" fill="#8ea9db"/><rect x="0" y="27" width="61" height="1" fill="#8ea9db"/><rect x="0" y="36" width="61" height="1" fill="#8ea9db"/><rect x="0.5" y="0.5" width="60" height="45" fill="none" stroke="#8ea9db" stroke-width="1"/><rect x="3" y="4" width="7" height="1.4" fill="#ffffff"/><rect x="15" y="4" width="7" height="1.4" fill="#ffffff"/><rect x="27" y="4" width="7" height="1.4" fill="#ffffff"/><rect x="39" y="4" width="7" height="1.4" fill="#ffffff"/><rect x="51" y="4" width="7" height="1.4" fill="#ffffff"/><rect x="3" y="13" width="7" height="1.4" fill="#000000"/><rect x="15" y="13" width="7" height="1.4" fill="#000000"/><rect x="27" y="13" width="7" height="1.4" fill="#000000"/><rect x="39" y="13" width="7" height="1.4" fill="#000000"/><rect x="51" y="13" width="7" height="1.4" fill="#000000"/><rect x="3" y="22" width="7" height="1.4" fill="#000000"/><rect x="15" y="22" width="7" height="1.4" fill="#000000"/><rect x="27" y="22" width="7" height="1.4" fill="#000000"/><rect x="39" y="22" width="7" height="1.4" fill="#000000"/><rect x="51" y="22" width="7" height="1.4" fill="#000000"/><rect x="3" y="31" width="7" height="1.4" fill="#000000"/><rect x="15" y="31" width="7" height="1.4" fill="#000000"/><rect x="27" y="31" width="7" height="1.4" fill="#000000"/><rect x="39" y="31" width="7" height="1.4" fill="#000000"/><rect x="51" y="31" width="7" height="1.4" fill="#000000"/><rect x="3" y="40" width="7" height="1.4" fill="#000000"/><rect x="15" y="40" width="7" height="1.4" fill="#000000"/><rect x="27" y="40" width="7" height="1.4" fill="#000000"/><rect x="39" y="40" width="7" height="1.4" fill="#000000"/><rect x="51" y="40" width="7" height="1.4" fill="#000000"/></svg>
<div style="position:absolute;left:3px;top:155px;width:1805px;height:46px;background:#e6e6e6;"></div>
<div style="position:absolute;left:8px;top:165px;width:102px;height:26px;background:#ffffff;border:1px solid #c6c6c6;"></div>
<div style="position:absolute;left:14.89px;top:174px;font-family:'Liberation Sans', sans-serif;font-size:12px;line-height:12px;color:#262626;font-weight:400;white-space:nowrap;transform-origin:0 0;transform:scaleX(1.1071);">A1</div>
<svg style="position:absolute;left:96px;top:175px;" width="8" height="5" viewBox="0 0 8 5"><path d="M0 0 H7 L3.5 3.5 Z" fill="#6d6d6d"/></svg>
<div style="position:absolute;left:124px;top:173px;width:2px;height:2px;background:#a0a0a0;"></div>
<div style="position:absolute;left:124px;top:178px;width:2px;height:2px;background:#a0a0a0;"></div>
<div style="position:absolute;left:124px;top:183px;width:2px;height:2px;background:#a0a0a0;"></div>
<div style="position:absolute;left:140px;top:165px;width:110px;height:26px;background:#ffffff;border:1px solid #c6c6c6;"></div>
<svg style="position:absolute;left:153px;top:172px;" width="12" height="12" viewBox="0 0 12 12"><path d="M1 1 L11 11 M11 1 L1 11" stroke="#b0b0b0" stroke-width="1.6"/></svg>
<svg style="position:absolute;left:188px;top:172px;" width="14" height="12" viewBox="0 0 14 12"><path d="M1 6.5 L5 10.5 L13 1.5" fill="none" stroke="#cdcdcd" stroke-width="2.3"/></svg>
<div style="position:absolute;left:225.00px;top:171px;font-family:'Liberation Sans', sans-serif;font-size:14px;line-height:14px;color:#555555;font-weight:400;white-space:nowrap;font-family:'Liberation Serif',serif;font-weight:700;"><i>f</i></div>
<div style="position:absolute;left:232.00px;top:175px;font-family:'Liberation Sans', sans-serif;font-size:10px;line-height:10px;color:#555555;font-weight:400;white-space:nowrap;font-family:'Liberation Serif',serif;font-weight:700;"><i>x</i></div>
<div style="position:absolute;left:253px;top:165px;width:1550px;height:26px;background:#ffffff;border:1px solid #c6c6c6;"></div>
<div style="position:absolute;left:264.16px;top:173px;font-family:'Liberation Sans', sans-serif;font-size:12.5px;line-height:12.5px;color:#262626;font-weight:400;white-space:nowrap;transform-origin:0 0;transform:scaleX(1.0361);">LOCATION</div>
<svg style="position:absolute;left:1790px;top:174px;" width="10" height="7" viewBox="0 0 10 7"><path d="M1 1 L4.5 5 L8 1" fill="none" stroke="#6d6d6d" stroke-width="1.8"/></svg>
<div style="position:absolute;left:3px;top:201px;width:1784px;height:20px;background:#e6e6e6;"></div>
<div style="position:absolute;left:3px;top:221px;width:26px;height:732px;background:#e6e6e6;"></div>
<div style="position:absolute;left:29px;top:221px;width:1758px;height:732px;background:#ffffff;"></div>
<div style="position:absolute;left:28px;top:221px;width:1px;height:732px;background:#d4d4d4;"></div>
<div style="position:absolute;left:28px;top:201px;width:1px;height:20px;background:linear-gradient(#dcdcdc,#a8a8a8);"></div>
<div style="position:absolute;left:255px;top:221px;width:1px;height:732px;background:#d4d4d4;"></div>
<div style="position:absolute;left:255px;top:201px;width:1px;height:20px;background:linear-gradient(#dcdcdc,#a8a8a8);"></div>
<div style="position:absolute;left:435px;top:221px;width:1px;height:732px;background:#d4d4d4;"></div>
<div style="position:absolute;left:435px;top:201px;width:1px;height:20px;background:linear-gradient(#dcdcdc,#a8a8a8);"></div>
<div style="position:absolute;left:604px;top:221px;width:1px;height:732px;background:#d4d4d4;"></div>
<div style="position:absolute;left:604px;top:201px;width:1px;height:20px;background:linear-gradient(#dcdcdc,#a8a8a8);"></div>
<div style="position:absolute;left:668px;top:221px;width:1px;height:732px;background:#d4d4d4;"></div>
<div style="position:absolute;left:668px;top:201px;width:1px;height:20px;background:linear-gradient(#dcdcdc,#a8a8a8);"></div>
<div style="position:absolute;left:732px;top:221px;width:1px;height:732px;background:#d4d4d4;"></div>
<div style="position:absolute;left:732px;top:201px;width:1px;height:20px;background:linear-gradient(#dcdcdc,#a8a8a8);"></div>
<div style="position:absolute;left:796px;top:221px;width:1px;height:732px;background:#d4d4d4;"></div>
<div style="position:absolute;left:796px;top:201px;width:1px;height:20px;background:linear-gradient(#dcdcdc,#a8a8a8);"></div>
<div style="position:absolute;left:860px;top:221px;width:1px;height:732px;background:#d4d4d4;"></div>
<div style="position:absolute;left:860px;top:201px;width:1px;height:20px;background:linear-gradient(#dcdcdc,#a8a8a8);"></div>
<div style="position:absolute;left:924px;top:221px;width:1px;height:732px;background:#d4d4d4;"></div>
<div style="position:absolute;left:924px;top:201px;width:1px;height:20px;background:linear-gradient(#dcdcdc,#a8a8a8);"></div>
<div style="position:absolute;left:988px;top:221px;width:1px;height:732px;background:#d4d4d4;"></div>
<div style="position:absolute;left:988px;top:201px;width:1px;height:20px;background:linear-gradient(#dcdcdc,#a8a8a8);"></div>
<div style="position:absolute;left:1052px;top:221px;width:1px;height:732px;background:#d4d4d4;"></div>
<div style="position:absolute;left:1052px;top:201px;width:1px;height:20px;background:linear-gradient(#dcdcdc,#a8a8a8);"></div>
<div style="position:absolute;left:1116px;top:221px;width:1px;height:732px;background:#d4d4d4;"></div>
<div style="position:absolute;left:1116px;top:201px;width:1px;height:20px;background:linear-gradient(#dcdcdc,#a8a8a8);"></div>
<div style="position:absolute;left:1180px;top:221px;width:1px;height:732px;background:#d4d4d4;"></div>
<div style="position:absolute;left:1180px;top:201px;width:1px;height:20px;background:linear-gradient(#dcdcdc,#a8a8a8);"></div>
<div style="position:absolute;left:1244px;top:221px;width:1px;height:732px;background:#d4d4d4;"></div>
<div style="position:absolute;left:1244px;top:201px;width:1px;height:20px;background:linear-gradient(#dcdcdc,#a8a8a8);"></div>
<div style="position:absolute;left:1308px;top:221px;width:1px;height:732px;background:#d4d4d4;"></div>
<div style="position:absolute;left:1308px;top:201px;width:1px;height:20px;background:linear-gradient(#dcdcdc,#a8a8a8);"></div>
<div style="position:absolute;left:1372px;top:221px;width:1px;height:732px;background:#d4d4d4;"></div>
<div style="position:absolute;left:1372px;top:201px;width:1px;height:20px;background:linear-gradient(#dcdcdc,#a8a8a8);"></div>
<div style="position:absolute;left:1436px;top:221px;width:1px;height:732px;background:#d4d4d4;"></div>
<div style="position:absolute;left:1436px;top:201px;width:1px;height:20px;background:linear-gradient(#dcdcdc,#a8a8a8);"></div>
<div style="position:absolute;left:1500px;top:221px;width:1px;height:732px;background:#d4d4d4;"></div>
<div style="position:absolute;left:1500px;top:201px;width:1px;height:20px;background:linear-gradient(#dcdcdc,#a8a8a8);"></div>
<div style="position:absolute;left:1564px;top:221px;width:1px;height:732px;background:#d4d4d4;"></div>
<div style="position:absolute;left:1564px;top:201px;width:1px;height:20px;background:linear-gradient(#dcdcdc,#a8a8a8);"></div>
<div style="position:absolute;left:1628px;top:221px;width:1px;height:732px;background:#d4d4d4;"></div>
<div style="position:absolute;left:1628px;top:201px;width:1px;height:20px;background:linear-gradient(#dcdcdc,#a8a8a8);"></div>
<div style="position:absolute;left:1692px;top:221px;width:1px;height:732px;background:#d4d4d4;"></div>
<div style="position:absolute;left:1692px;top:201px;width:1px;height:20px;background:linear-gradient(#dcdcdc,#a8a8a8);"></div>
<div style="position:absolute;left:1756px;top:221px;width:1px;height:732px;background:#d4d4d4;"></div>
<div style="position:absolute;left:1756px;top:201px;width:1px;height:20px;background:linear-gradient(#dcdcdc,#a8a8a8);"></div>
<div style="position:absolute;left:3px;top:240px;width:25px;height:1px;background:linear-gradient(90deg,#d6d6d6,#b4b4b4);"></div>
<div style="position:absolute;left:29px;top:240px;width:1757px;height:1px;background:#d4d4d4;"></div>
<div style="position:absolute;left:3px;top:260px;width:25px;height:1px;background:linear-gradient(90deg,#d6d6d6,#b4b4b4);"></div>
<div style="position:absolute;left:29px;top:260px;width:1757px;height:1px;background:#d4d4d4;"></div>
<div style="position:absolute;left:3px;top:280px;width:25px;height:1px;background:linear-gradient(90deg,#d6d6d6,#b4b4b4);"></div>
<div style="position:absolute;left:29px;top:280px;width:1757px;height:1px;background:#d4d4d4;"></div>
<div style="position:absolute;left:3px;top:300px;width:25px;height:1px;background:linear-gradient(90deg,#d6d6d6,#b4b4b4);"></div>
<div style="position:absolute;left:29px;top:300px;width:1757px;height:1px;background:#d4d4d4;"></div>
<div style="position:absolute;left:3px;top:320px;width:25px;height:1px;background:linear-gradient(90deg,#d6d6d6,#b4b4b4);"></div>
<div style="position:absolute;left:29px;top:320px;width:1757px;height:1px;background:#d4d4d4;"></div>
<div style="position:absolute;left:3px;top:340px;width:25px;height:1px;background:linear-gradient(90deg,#d6d6d6,#b4b4b4);"></div>
<div style="position:absolute;left:29px;top:340px;width:1757px;height:1px;background:#d4d4d4;"></div>
<div style="position:absolute;left:3px;top:360px;width:25px;height:1px;background:linear-gradient(90deg,#d6d6d6,#b4b4b4);"></div>
<div style="position:absolute;left:29px;top:360px;width:1757px;height:1px;background:#d4d4d4;"></div>
<div style="position:absolute;left:3px;top:380px;width:25px;height:1px;background:linear-gradient(90deg,#d6d6d6,#b4b4b4);"></div>
<div style="position:absolute;left:29px;top:380px;width:1757px;height:1px;background:#d4d4d4;"></div>
<div style="position:absolute;left:3px;top:400px;width:25px;height:1px;background:linear-gradient(90deg,#d6d6d6,#b4b4b4);"></div>
<div style="position:absolute;left:29px;top:400px;width:1757px;height:1px;background:#d4d4d4;"></div>
<div style="position:absolute;left:3px;top:420px;width:25px;height:1px;background:linear-gradient(90deg,#d6d6d6,#b4b4b4);"></div>
<div style="position:absolute;left:29px;top:420px;width:1757px;height:1px;background:#d4d4d4;"></div>
<div style="position:absolute;left:3px;top:440px;width:25px;height:1px;background:linear-gradient(90deg,#d6d6d6,#b4b4b4);"></div>
<div style="position:absolute;left:29px;top:440px;width:1757px;height:1px;background:#d4d4d4;"></div>
<div style="position:absolute;left:3px;top:460px;width:25px;height:1px;background:linear-gradient(90deg,#d6d6d6,#b4b4b4);"></div>
<div style="position:absolute;left:29px;top:460px;width:1757px;height:1px;background:#d4d4d4;"></div>
<div style="position:absolute;left:3px;top:480px;width:25px;height:1px;background:linear-gradient(90deg,#d6d6d6,#b4b4b4);"></div>
<div style="position:absolute;left:29px;top:480px;width:1757px;height:1px;background:#d4d4d4;"></div>
<div style="position:absolute;left:3px;top:500px;width:25px;height:1px;background:linear-gradient(90deg,#d6d6d6,#b4b4b4);"></div>
<div style="position:absolute;left:29px;top:500px;width:1757px;height:1px;background:#d4d4d4;"></div>
<div style="position:absolute;left:3px;top:520px;width:25px;height:1px;background:linear-gradient(90deg,#d6d6d6,#b4b4b4);"></div>
<div style="position:absolute;left:29px;top:520px;width:1757px;height:1px;background:#d4d4d4;"></div>
<div style="position:absolute;left:3px;top:540px;width:25px;height:1px;background:linear-gradient(90deg,#d6d6d6,#b4b4b4);"></div>
<div style="position:absolute;left:29px;top:540px;width:1757px;height:1px;background:#d4d4d4;"></div>
<div style="position:absolute;left:3px;top:560px;width:25px;height:1px;background:linear-gradient(90deg,#d6d6d6,#b4b4b4);"></div>
<div style="position:absolute;left:29px;top:560px;width:1757px;height:1px;background:#d4d4d4;"></div>
<div style="position:absolute;left:3px;top:580px;width:25px;height:1px;background:linear-gradient(90deg,#d6d6d6,#b4b4b4);"></div>
<div style="position:absolute;left:29px;top:580px;width:1757px;height:1px;background:#d4d4d4;"></div>
<div style="position:absolute;left:3px;top:600px;width:25px;height:1px;background:linear-gradient(90deg,#d6d6d6,#b4b4b4);"></div>
<div style="position:absolute;left:29px;top:600px;width:1757px;height:1px;background:#d4d4d4;"></div>
<div style="position:absolute;left:3px;top:620px;width:25px;height:1px;background:linear-gradient(90deg,#d6d6d6,#b4b4b4);"></div>
<div style="position:absolute;left:29px;top:620px;width:1757px;height:1px;background:#d4d4d4;"></div>
<div style="position:absolute;left:3px;top:640px;width:25px;height:1px;background:linear-gradient(90deg,#d6d6d6,#b4b4b4);"></div>
<div style="position:absolute;left:29px;top:640px;width:1757px;height:1px;background:#d4d4d4;"></div>
<div style="position:absolute;left:3px;top:660px;width:25px;height:1px;background:linear-gradient(90deg,#d6d6d6,#b4b4b4);"></div>
<div style="position:absolute;left:29px;top:660px;width:1757px;height:1px;background:#d4d4d4;"></div>
<div style="position:absolute;left:3px;top:680px;width:25px;height:1px;background:linear-gradient(90deg,#d6d6d6,#b4b4b4);"></div>
<div style="position:absolute;left:29px;top:680px;width:1757px;height:1px;background:#d4d4d4;"></div>
<div style="position:absolute;left:3px;top:700px;width:25px;height:1px;background:linear-gradient(90deg,#d6d6d6,#b4b4b4);"></div>
<div style="position:absolute;left:29px;top:700px;width:1757px;height:1px;background:#d4d4d4;"></div>
<div style="position:absolute;left:3px;top:720px;width:25px;height:1px;background:linear-gradient(90deg,#d6d6d6,#b4b4b4);"></div>
<div style="position:absolute;left:29px;top:720px;width:1757px;height:1px;background:#d4d4d4;"></div>
<div style="position:absolute;left:3px;top:740px;width:25px;height:1px;background:linear-gradient(90deg,#d6d6d6,#b4b4b4);"></div>
<div style="position:absolute;left:29px;top:740px;width:1757px;height:1px;background:#d4d4d4;"></div>
<div style="position:absolute;left:3px;top:760px;width:25px;height:1px;background:linear-gradient(90deg,#d6d6d6,#b4b4b4);"></div>
<div style="position:absolute;left:29px;top:760px;width:1757px;height:1px;background:#d4d4d4;"></div>
<div style="position:absolute;left:3px;top:780px;width:25px;height:1px;background:linear-gradient(90deg,#d6d6d6,#b4b4b4);"></div>
<div style="position:absolute;left:29px;top:780px;width:1757px;height:1px;background:#d4d4d4;"></div>
<div style="position:absolute;left:3px;top:800px;width:25px;height:1px;background:linear-gradient(90deg,#d6d6d6,#b4b4b4);"></div>
<div style="position:absolute;left:29px;top:800px;width:1757px;height:1px;background:#d4d4d4;"></div>
<div style="position:absolute;left:3px;top:820px;width:25px;height:1px;background:linear-gradient(90deg,#d6d6d6,#b4b4b4);"></div>
<div style="position:absolute;left:29px;top:820px;width:1757px;height:1px;background:#d4d4d4;"></div>
<div style="position:absolute;left:3px;top:840px;width:25px;height:1px;background:linear-gradient(90deg,#d6d6d6,#b4b4b4);"></div>
<div style="position:absolute;left:29px;top:840px;width:1757px;height:1px;background:#d4d4d4;"></div>
<div style="position:absolute;left:3px;top:860px;width:25px;height:1px;background:linear-gradient(90deg,#d6d6d6,#b4b4b4);"></div>
<div style="position:absolute;left:29px;top:860px;width:1757px;height:1px;background:#d4d4d4;"></div>
<div style="position:absolute;left:3px;top:880px;width:25px;height:1px;background:linear-gradient(90deg,#d6d6d6,#b4b4b4);"></div>
<div style="position:absolute;left:29px;top:880px;width:1757px;height:1px;background:#d4d4d4;"></div>
<div style="position:absolute;left:3px;top:900px;width:25px;height:1px;background:linear-gradient(90deg,#d6d6d6,#b4b4b4);"></div>
<div style="position:absolute;left:29px;top:900px;width:1757px;height:1px;background:#d4d4d4;"></div>
<div style="position:absolute;left:3px;top:920px;width:25px;height:1px;background:linear-gradient(90deg,#d6d6d6,#b4b4b4);"></div>
<div style="position:absolute;left:29px;top:920px;width:1757px;height:1px;background:#d4d4d4;"></div>
<div style="position:absolute;left:3px;top:940px;width:25px;height:1px;background:linear-gradient(90deg,#d6d6d6,#b4b4b4);"></div>
<div style="position:absolute;left:29px;top:940px;width:1757px;height:1px;background:#d4d4d4;"></div>
<div style="position:absolute;left:28px;top:221px;width:1px;height:732px;background:#ababab;"></div>
<div style="position:absolute;left:3px;top:220px;width:1784px;height:1px;background:#9e9e9e;"></div>
<div style="position:absolute;left:1786px;top:220px;width:1px;height:733px;background:#ababab;"></div>
<div style="position:absolute;left:29px;top:201px;width:226px;height:19px;background:#d2d2d2;"></div>
<div style="position:absolute;left:3px;top:221px;width:25px;height:19px;background:#d2d2d2;"></div>
<svg style="position:absolute;left:13px;top:205px;" width="13" height="13" viewBox="0 0 13 13"><path d="M12 0 V12 H0 Z" fill="#b4b4b4"/></svg>
<div style="position:absolute;left:29px;top:241px;width:575px;height:19px;background:#ddebf7;"></div>
<div style="position:absolute;left:29px;top:260px;width:575px;height:1px;background:#9bc2e6;"></div>
<div style="position:absolute;left:29px;top:261px;width:575px;height:19px;background:#ffffff;"></div>
<div style="position:absolute;left:255px;top:261px;width:1px;height:19px;background:#d4d4d4;"></div>
<div style="position:absolute;left:435px;top:261px;width:1px;height:19px;background:#d4d4d4;"></div>
<div style="position:absolute;left:29px;top:280px;width:575px;height:1px;background:#9bc2e6;"></div>
<div style="position:absolute;left:29px;top:281px;width:575px;height:19px;background:#ddebf7;"></div>
<div style="position:absolute;left:29px;top:300px;width:575px;height:1px;background:#9bc2e6;"></div>
<div style="position:absolute;left:29px;top:301px;width:575px;height:19px;background:#ffffff;"></div>
<div style="position:absolute;left:255px;top:301px;width:1px;height:19px;background:#d4d4d4;"></div>
<div style="position:absolute;left:435px;top:301px;width:1px;height:19px;background:#d4d4d4;"></div>
<div style="position:absolute;left:29px;top:320px;width:575px;height:1px;background:#9bc2e6;"></div>
<div style="position:absolute;left:29px;top:321px;width:575px;height:19px;background:#ddebf7;"></div>
<div style="position:absolute;left:29px;top:340px;width:575px;height:1px;background:#9bc2e6;"></div>
<div style="position:absolute;left:29px;top:341px;width:575px;height:19px;background:#ffffff;"></div>
<div style="position:absolute;left:255px;top:341px;width:1px;height:19px;background:#d4d4d4;"></div>
<div style="position:absolute;left:435px;top:341px;width:1px;height:19px;background:#d4d4d4;"></div>
<div style="position:absolute;left:29px;top:360px;width:575px;height:1px;background:#9bc2e6;"></div>
<div style="position:absolute;left:29px;top:361px;width:575px;height:19px;background:#ddebf7;"></div>
<div style="position:absolute;left:29px;top:380px;width:575px;height:1px;background:#9bc2e6;"></div>
<div style="position:absolute;left:29px;top:381px;width:575px;height:19px;background:#ffffff;"></div>
<div style="position:absolute;left:255px;top:381px;width:1px;height:19px;background:#d4d4d4;"></div>
<div style="position:absolute;left:435px;top:381px;width:1px;height:19px;background:#d4d4d4;"></div>
<div style="position:absolute;left:29px;top:400px;width:575px;height:1px;background:#9bc2e6;"></div>
<div style="position:absolute;left:29px;top:401px;width:575px;height:19px;background:#ddebf7;"></div>
<div style="position:absolute;left:29px;top:420px;width:575px;height:1px;background:#9bc2e6;"></div>
<div style="position:absolute;left:29px;top:421px;width:575px;height:19px;background:#ffffff;"></div>
<div style="position:absolute;left:255px;top:421px;width:1px;height:19px;background:#d4d4d4;"></div>
<div style="position:absolute;left:435px;top:421px;width:1px;height:19px;background:#d4d4d4;"></div>
<div style="position:absolute;left:29px;top:440px;width:575px;height:1px;background:#9bc2e6;"></div>
<div style="position:absolute;left:29px;top:441px;width:575px;height:19px;background:#ddebf7;"></div>
<div style="position:absolute;left:29px;top:460px;width:575px;height:1px;background:#9bc2e6;"></div>
<div style="position:absolute;left:29px;top:461px;width:575px;height:19px;background:#ffffff;"></div>
<div style="position:absolute;left:255px;top:461px;width:1px;height:19px;background:#d4d4d4;"></div>
<div style="position:absolute;left:435px;top:461px;width:1px;height:19px;background:#d4d4d4;"></div>
<div style="position:absolute;left:29px;top:480px;width:575px;height:1px;background:#9bc2e6;"></div>
<div style="position:absolute;left:29px;top:481px;width:575px;height:19px;background:#ddebf7;"></div>
<div style="position:absolute;left:29px;top:500px;width:575px;height:1px;background:#9bc2e6;"></div>
<div style="position:absolute;left:29px;top:501px;width:575px;height:19px;background:#ffffff;"></div>
<div style="position:absolute;left:255px;top:501px;width:1px;height:19px;background:#d4d4d4;"></div>
<div style="position:absolute;left:435px;top:501px;width:1px;height:19px;background:#d4d4d4;"></div>
<div style="position:absolute;left:29px;top:520px;width:575px;height:1px;background:#9bc2e6;"></div>
<div style="position:absolute;left:29px;top:521px;width:575px;height:19px;background:#ddebf7;"></div>
<div style="position:absolute;left:29px;top:540px;width:575px;height:1px;background:#9bc2e6;"></div>
<div style="position:absolute;left:29px;top:541px;width:575px;height:19px;background:#ffffff;"></div>
<div style="position:absolute;left:255px;top:541px;width:1px;height:19px;background:#d4d4d4;"></div>
<div style="position:absolute;left:435px;top:541px;width:1px;height:19px;background:#d4d4d4;"></div>
<div style="position:absolute;left:29px;top:560px;width:575px;height:1px;background:#9bc2e6;"></div>
<div style="position:absolute;left:29px;top:561px;width:575px;height:19px;background:#ddebf7;"></div>
<div style="position:absolute;left:29px;top:580px;width:575px;height:1px;background:#9bc2e6;"></div>
<div style="position:absolute;left:29px;top:581px;width:575px;height:19px;background:#ffffff;"></div>
<div style="position:absolute;left:255px;top:581px;width:1px;height:19px;background:#d4d4d4;"></div>
<div style="position:absolute;left:435px;top:581px;width:1px;height:19px;background:#d4d4d4;"></div>
<div style="position:absolute;left:29px;top:600px;width:575px;height:1px;background:#9bc2e6;"></div>
<div style="position:absolute;left:29px;top:601px;width:575px;height:19px;background:#ddebf7;"></div>
<div style="position:absolute;left:29px;top:620px;width:575px;height:1px;background:#9bc2e6;"></div>
<div style="position:absolute;left:29px;top:621px;width:575px;height:19px;background:#ffffff;"></div>
<div style="position:absolute;left:255px;top:621px;width:1px;height:19px;background:#d4d4d4;"></div>
<div style="position:absolute;left:435px;top:621px;width:1px;height:19px;background:#d4d4d4;"></div>
<div style="position:absolute;left:29px;top:640px;width:575px;height:1px;background:#9bc2e6;"></div>
<div style="position:absolute;left:29px;top:641px;width:575px;height:19px;background:#ddebf7;"></div>
<div style="position:absolute;left:29px;top:660px;width:575px;height:1px;background:#9bc2e6;"></div>
<div style="position:absolute;left:29px;top:661px;width:575px;height:19px;background:#ffffff;"></div>
<div style="position:absolute;left:255px;top:661px;width:1px;height:19px;background:#d4d4d4;"></div>
<div style="position:absolute;left:435px;top:661px;width:1px;height:19px;background:#d4d4d4;"></div>
<div style="position:absolute;left:29px;top:680px;width:575px;height:1px;background:#9bc2e6;"></div>
<div style="position:absolute;left:29px;top:681px;width:575px;height:19px;background:#ddebf7;"></div>
<div style="position:absolute;left:29px;top:700px;width:575px;height:1px;background:#9bc2e6;"></div>
<div style="position:absolute;left:29px;top:701px;width:575px;height:19px;background:#ffffff;"></div>
<div style="position:absolute;left:255px;top:701px;width:1px;height:19px;background:#d4d4d4;"></div>
<div style="position:absolute;left:435px;top:701px;width:1px;height:19px;background:#d4d4d4;"></div>
<div style="position:absolute;left:29px;top:720px;width:575px;height:1px;background:#9bc2e6;"></div>
<div style="position:absolute;left:29px;top:721px;width:575px;height:19px;background:#ddebf7;"></div>
<div style="position:absolute;left:29px;top:740px;width:575px;height:1px;background:#9bc2e6;"></div>
<div style="position:absolute;left:29px;top:741px;width:575px;height:19px;background:#ffffff;"></div>
<div style="position:absolute;left:255px;top:741px;width:1px;height:19px;background:#d4d4d4;"></div>
<div style="position:absolute;left:435px;top:741px;width:1px;height:19px;background:#d4d4d4;"></div>
<div style="position:absolute;left:29px;top:760px;width:575px;height:1px;background:#9bc2e6;"></div>
<div style="position:absolute;left:29px;top:761px;width:575px;height:19px;background:#ddebf7;"></div>
<div style="position:absolute;left:29px;top:780px;width:575px;height:1px;background:#9bc2e6;"></div>
<div style="position:absolute;left:29px;top:781px;width:575px;height:19px;background:#ffffff;"></div>
<div style="position:absolute;left:255px;top:781px;width:1px;height:19px;background:#d4d4d4;"></div>
<div style="position:absolute;left:435px;top:781px;width:1px;height:19px;background:#d4d4d4;"></div>
<div style="position:absolute;left:29px;top:800px;width:575px;height:1px;background:#9bc2e6;"></div>
<div style="position:absolute;left:29px;top:801px;width:575px;height:19px;background:#ddebf7;"></div>
<div style="position:absolute;left:29px;top:820px;width:575px;height:1px;background:#9bc2e6;"></div>
<div style="position:absolute;left:29px;top:821px;width:575px;height:19px;background:#ffffff;"></div>
<div style="position:absolute;left:255px;top:821px;width:1px;height:19px;background:#d4d4d4;"></div>
<div style="position:absolute;left:435px;top:821px;width:1px;height:19px;background:#d4d4d4;"></div>
<div style="position:absolute;left:29px;top:840px;width:575px;height:1px;background:#9bc2e6;"></div>
<div style="position:absolute;left:29px;top:841px;width:575px;height:19px;background:#ddebf7;"></div>
<div style="position:absolute;left:29px;top:860px;width:575px;height:1px;background:#9bc2e6;"></div>
<div style="position:absolute;left:29px;top:861px;width:575px;height:19px;background:#ffffff;"></div>
<div style="position:absolute;left:255px;top:861px;width:1px;height:19px;background:#d4d4d4;"></div>
<div style="position:absolute;left:435px;top:861px;width:1px;height:19px;background:#d4d4d4;"></div>
<div style="position:absolute;left:29px;top:880px;width:575px;height:1px;background:#9bc2e6;"></div>
<div style="position:absolute;left:29px;top:881px;width:575px;height:19px;background:#ddebf7;"></div>
<div style="position:absolute;left:29px;top:900px;width:575px;height:1px;background:#9bc2e6;"></div>
<div style="position:absolute;left:29px;top:901px;width:575px;height:19px;background:#ffffff;"></div>
<div style="position:absolute;left:255px;top:901px;width:1px;height:19px;background:#d4d4d4;"></div>
<div style="position:absolute;left:435px;top:901px;width:1px;height:19px;background:#d4d4d4;"></div>
<div style="position:absolute;left:29px;top:920px;width:575px;height:1px;background:#9bc2e6;"></div>
<div style="position:absolute;left:29px;top:921px;width:575px;height:19px;background:#ddebf7;"></div>
<div style="position:absolute;left:29px;top:940px;width:575px;height:1px;background:#9bc2e6;"></div>
<div style="position:absolute;left:29px;top:221px;width:575px;height:19px;background:#5b9bd5;"></div>
<div style="position:absolute;left:604px;top:221px;width:1px;height:732px;background:#9bc2e6;"></div>
<div style="position:absolute;left:142.00px;top:205px;font-family:'Liberation Sans', sans-serif;font-size:12px;line-height:12px;color:#217346;font-weight:400;white-space:nowrap;transform:translateX(-50%);">A</div>
<div style="position:absolute;left:345.50px;top:205px;font-family:'Liberation Sans', sans-serif;font-size:12px;line-height:12px;color:#262626;font-weight:400;white-space:nowrap;transform:translateX(-50%);">B</div>
<div style="position:absolute;left:520.00px;top:205px;font-family:'Liberation Sans', sans-serif;font-size:12px;line-height:12px;color:#262626;font-weight:400;white-space:nowrap;transform:translateX(-50%);">C</div>
<div style="position:absolute;left:636.50px;top:205px;font-family:'Liberation Sans', sans-serif;font-size:12px;line-height:12px;color:#262626;font-weight:400;white-space:nowrap;transform:translateX(-50%);">D</div>
<div style="position:absolute;left:700.50px;top:205px;font-family:'Liberation Sans', sans-serif;font-size:12px;line-height:12px;color:#262626;font-weight:400;white-space:nowrap;transform:translateX(-50%);">E</div>
<div style="position:absolute;left:764.50px;top:205px;font-family:'Liberation Sans', sans-serif;font-size:12px;line-height:12px;color:#262626;font-weight:400;white-space:nowrap;transform:translateX(-50%);">F</div>
<div style="position:absolute;left:828.50px;top:205px;font-family:'Liberation Sans', sans-serif;font-size:12px;line-height:12px;color:#262626;font-weight:400;white-space:nowrap;transform:translateX(-50%);">G</div>
<div style="position:absolute;left:892.50px;top:205px;font-family:'Liberation Sans', sans-serif;font-size:12px;line-height:12px;color:#262626;font-weight:400;white-space:nowrap;transform:translateX(-50%);">H</div>
<div style="position:absolute;left:956.50px;top:205px;font-family:'Liberation Sans', sans-serif;font-size:12px;line-height:12px;color:#262626;font-weight:400;white-space:nowrap;transform:translateX(-50%);">I</div>
<div style="position:absolute;left:1020.50px;top:205px;font-family:'Liberation Sans', sans-serif;font-size:12px;line-height:12px;color:#262626;font-weight:400;white-space:nowrap;transform:translateX(-50%);">J</div>
<div style="position:absolute;left:1084.50px;top:205px;font-family:'Liberation Sans', sans-serif;font-size:12px;line-height:12px;color:#262626;font-weight:400;white-space:nowrap;transform:translateX(-50%);">K</div>
<div style="position:absolute;left:1148.50px;top:205px;font-family:'Liberation Sans', sans-serif;font-size:12px;line-height:12px;color:#262626;font-weight:400;white-space:nowrap;transform:translateX(-50%);">L</div>
<div style="position:absolute;left:1212.50px;top:205px;font-family:'Liberation Sans', sans-serif;font-size:12px;line-height:12px;color:#262626;font-weight:400;white-space:nowrap;transform:translateX(-50%);">M</div>
<div style="position:absolute;left:1276.50px;top:205px;font-family:'Liberation Sans', sans-serif;font-size:12px;line-height:12px;color:#262626;font-weight:400;white-space:nowrap;transform:translateX(-50%);">N</div>
<div style="position:absolute;left:1340.50px;top:205px;font-family:'Liberation Sans', sans-serif;font-size:12px;line-height:12px;color:#262626;font-weight:400;white-space:nowrap;transform:translateX(-50%);">O</div>
<div style="position:absolute;left:1404.50px;top:205px;font-family:'Liberation Sans', sans-serif;font-size:12px;line-height:12px;color:#262626;font-weight:400;white-space:nowrap;transform:translateX(-50%);">P</div>
<div style="position:absolute;left:1468.50px;top:205px;font-family:'Liberation Sans', sans-serif;font-size:12px;line-height:12px;color:#262626;font-weight:400;white-space:nowrap;transform:translateX(-50%);">Q</div>
<div style="position:absolute;left:1532.50px;top:205px;font-family:'Liberation Sans', sans-serif;font-size:12px;line-height:12px;color:#262626;font-weight:400;white-space:nowrap;transform:translateX(-50%);">R</div>
<div style="position:absolute;left:1596.50px;top:205px;font-family:'Liberation Sans', sans-serif;font-size:12px;line-height:12px;color:#262626;font-weight:400;white-space:nowrap;transform:translateX(-50%);">S</div>
<div style="position:absolute;left:1660.50px;top:205px;font-family:'Liberation Sans', sans-serif;font-size:12px;line-height:12px;color:#262626;font-weight:400;white-space:nowrap;transform:translateX(-50%);">T</div>
<div style="position:absolute;left:1724.50px;top:205px;font-family:'Liberation Sans', sans-serif;font-size:12px;line-height:12px;color:#262626;font-weight:400;white-space:nowrap;transform:translateX(-50%);">U</div>
<div style="position:absolute;left:1788.50px;top:205px;font-family:'Liberation Sans', sans-serif;font-size:12px;line-height:12px;color:#262626;font-weight:400;white-space:nowrap;transform:translateX(-50%);">V</div>
<div style="position:absolute;left:1786px;top:201px;width:1px;height:19px;background:#e6e6e6;"></div>
<div style="position:absolute;left:15.50px;top:226px;font-family:'Liberation Sans', sans-serif;font-size:12px;line-height:12px;color:#217346;font-weight:400;white-space:nowrap;transform:translateX(-50%);">1</div>
<div style="position:absolute;left:15.50px;top:246px;font-family:'Liberation Sans', sans-serif;font-size:12px;line-height:12px;color:#262626;font-weight:400;white-space:nowrap;transform:translateX(-50%);">2</div>
<div style="position:absolute;left:15.50px;top:266px;font-family:'Liberation Sans', sans-serif;font-size:12px;line-height:12px;color:#262626;font-weight:400;white-space:nowrap;transform:translateX(-50%);">3</div>
<div style="position:absolute;left:15.50px;top:286px;font-family:'Liberation Sans', sans-serif;font-size:12px;line-height:12px;color:#262626;font-weight:400;white-space:nowrap;transform:translateX(-50%);">4</div>
<div style="position:absolute;left:15.50px;top:306px;font-family:'Liberation Sans', sans-serif;font-size:12px;line-height:12px;color:#262626;font-weight:400;white-space:nowrap;transform:translateX(-50%);">5</div>
<div style="position:absolute;left:15.50px;top:326px;font-family:'Liberation Sans', sans-serif;font-size:12px;line-height:12px;color:#262626;font-weight:400;white-space:nowrap;transform:translateX(-50%);">6</div>
<div style="position:absolute;left:15.50px;top:346px;font-family:'Liberation Sans', sans-serif;font-size:12px;line-height:12px;color:#262626;font-weight:400;white-space:nowrap;transform:translateX(-50%);">7</div>
<div style="position:absolute;left:15.50px;top:366px;font-family:'Liberation Sans', sans-serif;font-size:12px;line-height:12px;color:#262626;font-weight:400;white-space:nowrap;transform:translateX(-50%);">8</div>
<div style="position:absolute;left:15.50px;top:386px;font-family:'Liberation Sans', sans-serif;font-size:12px;line-height:12px;color:#262626;font-weight:400;white-space:nowrap;transform:translateX(-50%);">9</div>
<div style="position:absolute;left:15.50px;top:406px;font-family:'Liberation Sans', sans-serif;font-size:12px;line-height:12px;color:#262626;font-weight:400;white-space:nowrap;transform:translateX(-50%);">10</div>
<div style="position:absolute;left:15.50px;top:426px;font-family:'Liberation Sans', sans-serif;font-size:12px;line-height:12px;color:#262626;font-weight:400;white-space:nowrap;transform:translateX(-50%);">11</div>
<div style="position:absolute;left:15.50px;top:446px;font-family:'Liberation Sans', sans-serif;font-size:12px;line-height:12px;color:#262626;font-weight:400;white-space:nowrap;transform:translateX(-50%);">12</div>
<div style="position:absolute;left:15.50px;top:466px;font-family:'Liberation Sans', sans-serif;font-size:12px;line-height:12px;color:#262626;font-weight:400;white-space:nowrap;transform:translateX(-50%);">13</div>
<div style="position:absolute;left:15.50px;top:486px;font-family:'Liberation Sans', sans-serif;font-size:12px;line-height:12px;color:#262626;font-weight:400;white-space:nowrap;transform:translateX(-50%);">14</div>
<div style="position:absolute;left:15.50px;top:506px;font-family:'Liberation Sans', sans-serif;font-size:12px;line-height:12px;color:#262626;font-weight:400;white-space:nowrap;transform:translateX(-50%);">15</div>
<div style="position:absolute;left:15.50px;top:526px;font-family:'Liberation Sans', sans-serif;font-size:12px;line-height:12px;color:#262626;font-weight:400;white-space:nowrap;transform:translateX(-50%);">16</div>
<div style="position:absolute;left:15.50px;top:546px;font-family:'Liberation Sans', sans-serif;font-size:12px;line-height:12px;color:#262626;font-weight:400;white-space:nowrap;transform:translateX(-50%);">17</div>
<div style="position:absolute;left:15.50px;top:566px;font-family:'Liberation Sans', sans-serif;font-size:12px;line-height:12px;color:#262626;font-weight:400;white-space:nowrap;transform:translateX(-50%);">18</div>
<div style="position:absolute;left:15.50px;top:586px;font-family:'Liberation Sans', sans-serif;font-size:12px;line-height:12px;color:#262626;font-weight:400;white-space:nowrap;transform:translateX(-50%);">19</div>
<div style="position:absolute;left:15.50px;top:606px;font-family:'Liberation Sans', sans-serif;font-size:12px;line-height:12px;color:#262626;font-weight:400;white-space:nowrap;transform:translateX(-50%);">20</div>
<div style="position:absolute;left:15.50px;top:626px;font-family:'Liberation Sans', sans-serif;font-size:12px;line-height:12px;color:#262626;font-weight:400;white-space:nowrap;transform:translateX(-50%);">21</div>
<div style="position:absolute;left:15.50px;top:646px;font-family:'Liberation Sans', sans-serif;font-size:12px;line-height:12px;color:#262626;font-weight:400;white-space:nowrap;transform:translateX(-50%);">22</div>
<div style="position:absolute;left:15.50px;top:666px;font-family:'Liberation Sans', sans-serif;font-size:12px;line-height:12px;color:#262626;font-weight:400;white-space:nowrap;transform:translateX(-50%);">23</div>
<div style="position:absolute;left:15.50px;top:686px;font-family:'Liberation Sans', sans-serif;font-size:12px;line-height:12px;color:#262626;font-weight:400;white-space:nowrap;transform:translateX(-50%);">24</div>
<div style="position:absolute;left:15.50px;top:706px;font-family:'Liberation Sans', sans-serif;font-size:12px;line-height:12px;color:#262626;font-weight:400;white-space:nowrap;transform:translateX(-50%);">25</div>
<div style="position:absolute;left:15.50px;top:726px;font-family:'Liberation Sans', sans-serif;font-size:12px;line-height:12px;color:#262626;font-weight:400;white-space:nowrap;transform:translateX(-50%);">26</div>
<div style="position:absolute;left:15.50px;top:746px;font-family:'Liberation Sans', sans-serif;font-size:12px;line-height:12px;color:#262626;font-weight:400;white-space:nowrap;transform:translateX(-50%);">27</div>
<div style="position:absolute;left:15.50px;top:766px;font-family:'Liberation Sans', sans-serif;font-size:12px;line-height:12px;color:#262626;font-weight:400;white-space:nowrap;transform:translateX(-50%);">28</div>
<div style="position:absolute;left:15.50px;top:786px;font-family:'Liberation Sans', sans-serif;font-size:12px;line-height:12px;color:#262626;font-weight:400;white-space:nowrap;transform:translateX(-50%);">29</div>
<div style="position:absolute;left:15.50px;top:806px;font-family:'Liberation Sans', sans-serif;font-size:12px;line-height:12px;color:#262626;font-weight:400;white-space:nowrap;transform:translateX(-50%);">30</div>
<div style="position:absolute;left:15.50px;top:826px;font-family:'Liberation Sans', sans-serif;font-size:12px;line-height:12px;color:#262626;font-weight:400;white-space:nowrap;transform:translateX(-50%);">31</div>
<div style="position:absolute;left:15.50px;top:846px;font-family:'Liberation Sans', sans-serif;font-size:12px;line-height:12px;color:#262626;font-weight:400;white-space:nowrap;transform:translateX(-50%);">32</div>
<div style="position:absolute;left:15.50px;top:866px;font-family:'Liberation Sans', sans-serif;font-size:12px;line-height:12px;color:#262626;font-weight:400;white-space:nowrap;transform:translateX(-50%);">33</div>
<div style="position:absolute;left:15.50px;top:886px;font-family:'Liberation Sans', sans-serif;font-size:12px;line-height:12px;color:#262626;font-weight:400;white-space:nowrap;transform:translateX(-50%);">34</div>
<div style="position:absolute;left:15.50px;top:906px;font-family:'Liberation Sans', sans-serif;font-size:12px;line-height:12px;color:#262626;font-weight:400;white-space:nowrap;transform:translateX(-50%);">35</div>
<div style="position:absolute;left:15.50px;top:926px;font-family:'Liberation Sans', sans-serif;font-size:12px;line-height:12px;color:#262626;font-weight:400;white-space:nowrap;transform:translateX(-50%);">36</div>
<div style="position:absolute;left:30.89px;top:246px;font-family:'Liberation Sans', sans-serif;font-size:12.5px;line-height:12.5px;color:#000000;font-weight:400;white-space:nowrap;transform-origin:0 0;transform:scaleX(1.0158);">OLAUDAH EQUIANO</div>
<div style="position:absolute;left:30.91px;top:266px;font-family:'Liberation Sans', sans-serif;font-size:12.5px;line-height:12.5px;color:#000000;font-weight:400;white-space:nowrap;transform-origin:0 0;transform:scaleX(0.9837);">GUSTAVUS VASSA</div>
<div style="position:absolute;left:30.46px;top:286px;font-family:'Liberation Sans', sans-serif;font-size:12.5px;line-height:12.5px;color:#000000;font-weight:400;white-space:nowrap;transform-origin:0 0;transform:scaleX(1.0447);">LONDON</div>
<div style="position:absolute;left:30.35px;top:306px;font-family:'Liberation Sans', sans-serif;font-size:12.5px;line-height:12.5px;color:#000000;font-weight:400;white-space:nowrap;transform-origin:0 0;transform:scaleX(1.1526);">Fleet-Street</div>
<div style="position:absolute;left:30.86px;top:326px;font-family:'Liberation Sans', sans-serif;font-size:12.5px;line-height:12.5px;color:#000000;font-weight:400;white-space:nowrap;transform-origin:0 0;transform:scaleX(1.0634);">Gray's Inn</div>
<div style="position:absolute;left:30.34px;top:346px;font-family:'Liberation Sans', sans-serif;font-size:12.5px;line-height:12.5px;color:#000000;font-weight:400;white-space:nowrap;transform-origin:0 0;transform:scaleX(1.1595);">Holborn</div>
<div style="position:absolute;left:30.82px;top:366px;font-family:'Liberation Sans', sans-serif;font-size:12.5px;line-height:12.5px;color:#000000;font-weight:400;white-space:nowrap;transform-origin:0 0;transform:scaleX(1.1345);">Oxford Street</div>
<div style="position:absolute;left:30.38px;top:386px;font-family:'Liberation Sans', sans-serif;font-size:12.5px;line-height:12.5px;color:#000000;font-weight:400;white-space:nowrap;transform-origin:0 0;transform:scaleX(1.1242);">Prince's-Street</div>
<div style="position:absolute;left:30.86px;top:406px;font-family:'Liberation Sans', sans-serif;font-size:12.5px;line-height:12.5px;color:#000000;font-weight:400;white-space:nowrap;transform-origin:0 0;transform:scaleX(1.0676);">Soho</div>
<div style="position:absolute;left:30.38px;top:426px;font-family:'Liberation Sans', sans-serif;font-size:12.5px;line-height:12.5px;color:#000000;font-weight:400;white-space:nowrap;transform-origin:0 0;transform:scaleX(1.1203);">Newington-Causeway</div>
<div style="position:absolute;left:30.83px;top:446px;font-family:'Liberation Sans', sans-serif;font-size:12.5px;line-height:12.5px;color:#000000;font-weight:400;white-space:nowrap;transform-origin:0 0;transform:scaleX(1.1192);">Stationer's Hall</div>
<div style="position:absolute;left:31.40px;top:466px;font-family:'Liberation Sans', sans-serif;font-size:12.5px;line-height:12.5px;color:#000000;font-weight:400;white-space:nowrap;transform-origin:0 0;transform:scaleX(0.9852);">VASSA</div>
<div style="position:absolute;left:30.83px;top:486px;font-family:'Liberation Sans', sans-serif;font-size:12.5px;line-height:12.5px;color:#000000;font-weight:400;white-space:nowrap;transform-origin:0 0;transform:scaleX(1.1148);">Great Britain</div>
<div style="position:absolute;left:30.37px;top:506px;font-family:'Liberation Sans', sans-serif;font-size:12.5px;line-height:12.5px;color:#000000;font-weight:400;white-space:nowrap;transform-origin:0 0;transform:scaleX(1.1311);">Providence</div>
<div style="position:absolute;left:30.39px;top:526px;font-family:'Liberation Sans', sans-serif;font-size:12.5px;line-height:12.5px;color:#000000;font-weight:400;white-space:nowrap;transform-origin:0 0;transform:scaleX(1.1098);">Prince of Wales</div>
<div style="position:absolute;left:30.48px;top:546px;font-family:'Liberation Sans', sans-serif;font-size:12.5px;line-height:12.5px;color:#000000;font-weight:400;white-space:nowrap;transform-origin:0 0;transform:scaleX(1.0152);">Esq</div>
<div style="position:absolute;left:30.48px;top:566px;font-family:'Liberation Sans', sans-serif;font-size:12.5px;line-height:12.5px;color:#000000;font-weight:400;white-space:nowrap;transform-origin:0 0;transform:scaleX(1.0152);">Esq</div>
<div style="position:absolute;left:30.42px;top:586px;font-family:'Liberation Sans', sans-serif;font-size:12.5px;line-height:12.5px;color:#000000;font-weight:400;white-space:nowrap;transform-origin:0 0;transform:scaleX(1.0818);">Bangor</div>
<div style="position:absolute;left:30.48px;top:606px;font-family:'Liberation Sans', sans-serif;font-size:12.5px;line-height:12.5px;color:#000000;font-weight:400;white-space:nowrap;transform-origin:0 0;transform:scaleX(1.0152);">Esq</div>
<div style="position:absolute;left:30.48px;top:626px;font-family:'Liberation Sans', sans-serif;font-size:12.5px;line-height:12.5px;color:#000000;font-weight:400;white-space:nowrap;transform-origin:0 0;transform:scaleX(1.0152);">Esq</div>
<div style="position:absolute;left:30.48px;top:646px;font-family:'Liberation Sans', sans-serif;font-size:12.5px;line-height:12.5px;color:#000000;font-weight:400;white-space:nowrap;transform-origin:0 0;transform:scaleX(1.0152);">Esq</div>
<div style="position:absolute;left:30.48px;top:666px;font-family:'Liberation Sans', sans-serif;font-size:12.5px;line-height:12.5px;color:#000000;font-weight:400;white-space:nowrap;transform-origin:0 0;transform:scaleX(1.0152);">Esq</div>
<div style="position:absolute;left:30.48px;top:686px;font-family:'Liberation Sans', sans-serif;font-size:12.5px;line-height:12.5px;color:#000000;font-weight:400;white-space:nowrap;transform-origin:0 0;transform:scaleX(1.0152);">Esq</div>
<div style="position:absolute;left:30.48px;top:706px;font-family:'Liberation Sans', sans-serif;font-size:12.5px;line-height:12.5px;color:#000000;font-weight:400;white-space:nowrap;transform-origin:0 0;transform:scaleX(1.0152);">Esq</div>
<div style="position:absolute;left:30.48px;top:726px;font-family:'Liberation Sans', sans-serif;font-size:12.5px;line-height:12.5px;color:#000000;font-weight:400;white-space:nowrap;transform-origin:0 0;transform:scaleX(1.0152);">Esq</div>
<div style="position:absolute;left:30.48px;top:746px;font-family:'Liberation Sans', sans-serif;font-size:12.5px;line-height:12.5px;color:#000000;font-weight:400;white-space:nowrap;transform-origin:0 0;transform:scaleX(1.0152);">Esq</div>
<div style="position:absolute;left:30.48px;top:766px;font-family:'Liberation Sans', sans-serif;font-size:12.5px;line-height:12.5px;color:#000000;font-weight:400;white-space:nowrap;transform-origin:0 0;transform:scaleX(1.0152);">Esq</div>
<div style="position:absolute;left:30.48px;top:786px;font-family:'Liberation Sans', sans-serif;font-size:12.5px;line-height:12.5px;color:#000000;font-weight:400;white-space:nowrap;transform-origin:0 0;transform:scaleX(1.0152);">Esq</div>
<div style="position:absolute;left:30.48px;top:806px;font-family:'Liberation Sans', sans-serif;font-size:12.5px;line-height:12.5px;color:#000000;font-weight:400;white-space:nowrap;transform-origin:0 0;transform:scaleX(1.0152);">Esq</div>
<div style="position:absolute;left:30.48px;top:826px;font-family:'Liberation Sans', sans-serif;font-size:12.5px;line-height:12.5px;color:#000000;font-weight:400;white-space:nowrap;transform-origin:0 0;transform:scaleX(1.0152);">Esq</div>
<div style="position:absolute;left:30.48px;top:846px;font-family:'Liberation Sans', sans-serif;font-size:12.5px;line-height:12.5px;color:#000000;font-weight:400;white-space:nowrap;transform-origin:0 0;transform:scaleX(1.0152);">Esq</div>
<div style="position:absolute;left:30.48px;top:866px;font-family:'Liberation Sans', sans-serif;font-size:12.5px;line-height:12.5px;color:#000000;font-weight:400;white-space:nowrap;transform-origin:0 0;transform:scaleX(1.0152);">Esq</div>
<div style="position:absolute;left:30.48px;top:886px;font-family:'Liberation Sans', sans-serif;font-size:12.5px;line-height:12.5px;color:#000000;font-weight:400;white-space:nowrap;transform-origin:0 0;transform:scaleX(1.0152);">Esq</div>
<div style="position:absolute;left:30.48px;top:906px;font-family:'Liberation Sans', sans-serif;font-size:12.5px;line-height:12.5px;color:#000000;font-weight:400;white-space:nowrap;transform-origin:0 0;transform:scaleX(1.0152);">Esq</div>
<div style="position:absolute;left:30.48px;top:926px;font-family:'Liberation Sans', sans-serif;font-size:12.5px;line-height:12.5px;color:#000000;font-weight:400;white-space:nowrap;transform-origin:0 0;transform:scaleX(1.0152);">Esq</div>
<div style="position:absolute;left:30.79px;top:226px;font-family:'Liberation Sans', sans-serif;font-size:12.3px;line-height:12.3px;color:#ffffff;font-weight:700;white-space:nowrap;transform-origin:0 0;transform:scaleX(1.0162);">LOCATION</div>
<div style="position:absolute;left:257.82px;top:226px;font-family:'Liberation Sans', sans-serif;font-size:12.3px;line-height:12.3px;color:#ffffff;font-weight:700;white-space:nowrap;transform-origin:0 0;transform:scaleX(0.9702);">PERSON</div>
<div style="position:absolute;left:438.28px;top:226px;font-family:'Liberation Sans', sans-serif;font-size:12.3px;line-height:12.3px;color:#ffffff;font-weight:700;white-space:nowrap;transform-origin:0 0;transform:scaleX(1.0431);">ORGANIZATION</div>
<div style="position:absolute;left:238px;top:222px;width:17px;height:17px;background:linear-gradient(#ffffff,#eceef2);border:1px solid #a9a9a9;"></div>
<svg style="position:absolute;left:243px;top:229px;" width="8" height="5" viewBox="0 0 8 5"><path d="M0 0 H7 L3.5 4 Z" fill="#5f5f5f"/></svg>
<div style="position:absolute;left:418px;top:222px;width:17px;height:17px;background:linear-gradient(#ffffff,#eceef2);border:1px solid #a9a9a9;"></div>
<svg style="position:absolute;left:423px;top:229px;" width="8" height="5" viewBox="0 0 8 5"><path d="M0 0 H7 L3.5 4 Z" fill="#5f5f5f"/></svg>
<div style="position:absolute;left:587px;top:222px;width:17px;height:17px;background:linear-gradient(#ffffff,#eceef2);border:1px solid #a9a9a9;"></div>
<svg style="position:absolute;left:592px;top:229px;" width="8" height="5" viewBox="0 0 8 5"><path d="M0 0 H7 L3.5 4 Z" fill="#5f5f5f"/></svg>
<div style="position:absolute;left:29px;top:221px;width:227px;height:19px;background:transparent;border:1px solid #ffffff;border-right:none;border-bottom:none;"></div>
<div style="position:absolute;left:29px;top:239px;width:224px;height:1px;background:#ffffff;"></div>
<div style="position:absolute;left:254px;top:221px;width:1px;height:17px;background:#ffffff;"></div>
<div style="position:absolute;left:27px;top:219px;width:230px;height:23px;background:transparent;border:2px solid #217346;"></div>
<div style="position:absolute;left:252px;top:237px;width:7px;height:7px;background:#ffffff;"></div>
<div style="position:absolute;left:253px;top:238px;width:5px;height:5px;background:#217346;"></div>
<div style="position:absolute;left:1787px;top:201px;width:20px;height:752px;background:#e6e6e6;"></div>
<div style="position:absolute;left:1790px;top:235px;width:15px;height:704px;background:#dcdcdc;"></div>
<div style="position:absolute;left:1790px;top:203px;width:15px;height:15px;background:#ffffff;border:1px solid #c6c6c6;"></div>
<svg style="position:absolute;left:1793px;top:207px;" width="9" height="5" viewBox="0 0 9 5"><path d="M0.5 4.5 L4.5 0.5 L8.5 4.5 Z" fill="#6d6d6d"/></svg>
<div style="position:absolute;left:1790px;top:218px;width:15px;height:17px;background:#ffffff;border:1px solid #c6c6c6;"></div>
<div style="position:absolute;left:1790px;top:939px;width:15px;height:15px;background:#ffffff;border:1px solid #c6c6c6;"></div>
<svg style="position:absolute;left:1793px;top:945px;" width="9" height="5" viewBox="0 0 9 5"><path d="M0.5 0.5 L4.5 4.5 L8.5 0.5 Z" fill="#6d6d6d"/></svg>
<div style="position:absolute;left:3px;top:953px;width:1805px;height:28px;background:#e6e6e6;"></div>
<div style="position:absolute;left:3px;top:953px;width:1805px;height:1px;background:#9e9e9e;"></div>
<div style="position:absolute;left:103px;top:953px;width:65px;height:24px;background:#ffffff;border:1px solid #9e9e9e;border-top:none;border-bottom:none;"></div>
<div style="position:absolute;left:103px;top:976px;width:65px;height:2px;background:#217346;"></div>
<svg style="position:absolute;left:30px;top:963px;" width="5" height="8" viewBox="0 0 5 8"><path d="M4.5 0 V7.5 L0.5 3.75 Z" fill="#b9b9b9"/></svg>
<svg style="position:absolute;left:58px;top:963px;" width="5" height="8" viewBox="0 0 5 8"><path d="M0.5 0 V7.5 L4.5 3.75 Z" fill="#b9b9b9"/></svg>
<div style="position:absolute;left:114.69px;top:961px;font-family:'Liberation Sans', sans-serif;font-size:12px;line-height:12px;color:#1e6e42;font-weight:700;white-space:nowrap;transform-origin:0 0;transform:scaleX(1.0363);">Sheet1</div>
<svg style="position:absolute;left:200px;top:958px;" width="18" height="18" viewBox="0 0 18 18"><circle cx="9" cy="9" r="7.5" fill="none" stroke="#6d6d6d" stroke-width="1.1"/><path d="M9 5.5 V12.5 M5.5 9 H12.5" stroke="#6d6d6d" stroke-width="1.8"/></svg>
<div style="position:absolute;left:1086px;top:962px;width:2px;height:2px;background:#a8a8a8;"></div>
<div style="position:absolute;left:1086px;top:966px;width:2px;height:2px;background:#a8a8a8;"></div>
<div style="position:absolute;left:1086px;top:970px;width:2px;height:2px;background:#a8a8a8;"></div>
<div style="position:absolute;left:1103px;top:960px;width:684px;height:15px;background:#dadada;"></div>
<div style="position:absolute;left:1103px;top:960px;width:15px;height:15px;background:#ffffff;border:1px solid #a6a6a6;"></div>
<svg style="position:absolute;left:1107px;top:964px;" width="5" height="8" viewBox="0 0 5 8"><path d="M4.5 0 V7 L0.5 3.5 Z" fill="#6d6d6d"/></svg>
<div style="position:absolute;left:1117px;top:960px;width:624px;height:15px;background:#ffffff;border:1px solid #a6a6a6;"></div>
<div style="position:absolute;left:1772px;top:960px;width:15px;height:15px;background:#ffffff;border:1px solid #a6a6a6;"></div>
<svg style="position:absolute;left:1777px;top:964px;" width="5" height="8" viewBox="0 0 5 8"><path d="M0.5 0 V7 L4.5 3.5 Z" fill="#6d6d6d"/></svg>
<div style="position:absolute;left:3px;top:981px;width:1805px;height:22px;background:#f0f0f0;"></div>
<div style="position:absolute;left:3px;top:981px;width:1805px;height:1px;background:#c6c6c6;"></div>
<div style="position:absolute;left:3px;top:1002px;width:1805px;height:1px;background:#ffffff;"></div>
<div style="position:absolute;left:3px;top:982px;width:1px;height:21px;background:#ffffff;"></div>
<div style="position:absolute;left:11.09px;top:986px;font-family:'Liberation Sans', sans-serif;font-size:12px;line-height:12px;color:#444444;font-weight:400;white-space:nowrap;transform-origin:0 0;transform:scaleX(0.9080);">Ready</div>
<svg style="position:absolute;left:61px;top:984px;" width="14" height="15" viewBox="0 0 14 15"><circle cx="3.5" cy="3.5" r="2.8" fill="#6d6d6d"/><rect x="2.5" y="4.5" width="11" height="10" fill="#fff" stroke="#6d6d6d"/><path d="M7 3 H13.5 V4.5" fill="none" stroke="#6d6d6d"/><path d="M3 8 H13 M3 11 H13 M6 5 V14 M9.5 5 V14" stroke="#6d6d6d" stroke-width="0.8"/></svg>
<div style="position:absolute;left:1505px;top:982px;width:38px;height:21px;background:#c6c6c6;"></div>
<svg style="position:absolute;left:1517px;top:985px;" width="14" height="14" viewBox="0 0 14 14"><rect x="1" y="1" width="3" height="3" fill="#6d6d6d"/><rect x="1" y="5" width="3" height="3" fill="#6d6d6d"/><rect x="1" y="9" width="3" height="3" fill="#6d6d6d"/><rect x="5" y="1" width="3" height="3" fill="#6d6d6d"/><rect x="5" y="5" width="3" height="3" fill="#6d6d6d"/><rect x="5" y="9" width="3" height="3" fill="#6d6d6d"/><rect x="9" y="1" width="3" height="3" fill="#6d6d6d"/><rect x="9" y="5" width="3" height="3" fill="#6d6d6d"/><rect x="9" y="9" width="3" height="3" fill="#6d6d6d"/><rect x="0.5" y="0.5" width="13" height="13" fill="none" stroke="#6d6d6d" stroke-width="0.6"/></svg>
<svg style="position:absolute;left:1555px;top:985px;" width="14" height="14" viewBox="0 0 14 14"><rect x="0.5" y="0.5" width="13" height="13" fill="none" stroke="#6d6d6d"/><rect x="3" y="3" width="8" height="8" fill="none" stroke="#6d6d6d"/><path d="M4.5 5 H9.5 M4.5 7 H9.5 M4.5 9 H9.5" stroke="#6d6d6d" stroke-width="0.8"/></svg>
<svg style="position:absolute;left:1593px;top:985px;" width="14" height="14" viewBox="0 0 14 14"><path d="M0.5 0.5 H13.5 V13.5 H0.5 Z M5 0.5 V6.5 M8.5 0.5 V4.5 H13.5 M0.5 6.5 H8.5 V4.5" fill="none" stroke="#6d6d6d"/></svg>
<div style="position:absolute;left:1624px;top:991px;width:7px;height:2px;background:#555555;"></div>
<div style="position:absolute;left:1634px;top:991px;width:100px;height:1px;background:#a0a0a0;"></div>
<div style="position:absolute;left:1682px;top:985px;width:4px;height:13px;background:#606060;"></div>
<svg style="position:absolute;left:1738px;top:986px;" width="10" height="10" viewBox="0 0 10 10"><path d="M5 0 V10 M0 5 H10" stroke="#555" stroke-width="1.8"/></svg>
<div style="position:absolute;left:1761.80px;top:985px;font-family:'Liberation Sans', sans-serif;font-size:12px;line-height:12px;color:#444444;font-weight:400;white-space:nowrap;transform-origin:0 0;transform:scaleX(0.8844);">100%</div>
</body></html>
